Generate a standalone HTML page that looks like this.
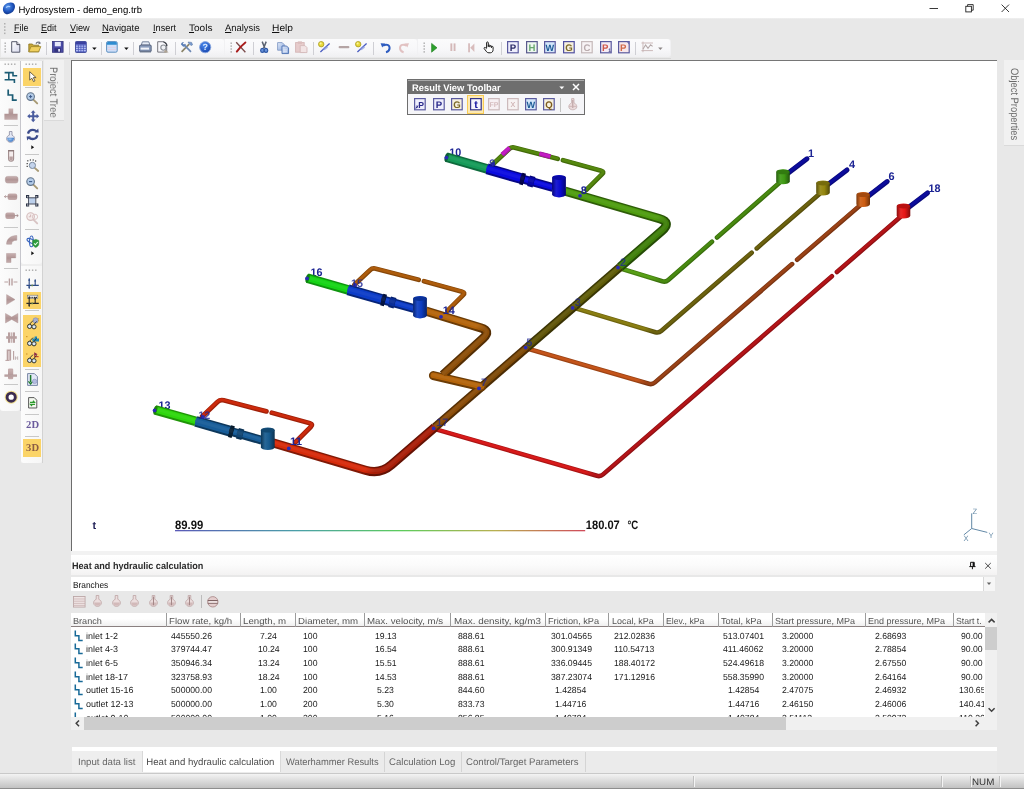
<!DOCTYPE html>
<html lang="en"><head><meta charset="utf-8"><title>Hydrosystem - demo_eng.trb</title>
<style>
html,body{margin:0;padding:0;}
body{width:1024px;height:789px;overflow:hidden;background:#e8e8e8;font-family:"Liberation Sans",sans-serif;position:relative;text-rendering:geometricPrecision;}
svg text{text-rendering:geometricPrecision;}
#app{position:absolute;left:0;top:0;width:1024px;height:789px;overflow:hidden;will-change:transform;}
.r{position:absolute;box-sizing:border-box;}
.t{position:absolute;white-space:pre;transform-origin:0 50%;}
svg{position:absolute;overflow:visible;}
u{text-decoration:underline;text-underline-offset:1px;text-decoration-thickness:0.8px;}
</style></head>
<body>
<div id="app">
<!-- 10_chrome -->
<div class="r" style="left:0px;top:0px;width:1024px;height:18.3px;background:#fff;"></div>
<span class="t" style="left:18.43px;top:4.00px;font-size:9.6px;line-height:14px;color:#000;">Hydrosystem - demo_eng.trb</span>
<svg style="left:925px;top:0" width="99" height="19" viewBox="0 0 99 19"><g stroke="#222" stroke-width="0.9" fill="none"><path d="M4.5 8.5h8.5"/><rect x="40.8" y="6.3" width="5.6" height="5.6"/><path d="M42.6 6.3V4.6h5.6v5.6h-1.8"/><path d="M76.6 4.6l7.4 7.4M84 4.6l-7.4 7.4"/></g></svg>
<div class="r" style="left:0px;top:18.3px;width:1024px;height:20.5px;background:linear-gradient(#f1f1f1,#e8e8e8 1.2px);"></div>
<svg style="left:3px;top:22px" width="4" height="14"><g fill="#b0b0b0"><rect x="1" y="1" width="1.5" height="1.5"/><rect x="1" y="4.2" width="1.5" height="1.5"/><rect x="1" y="7.4" width="1.5" height="1.5"/><rect x="1" y="10.6" width="1.5" height="1.5"/></g></svg>
<span class="t" style="left:13.53px;top:22.00px;font-size:9.6px;line-height:14px;color:#111;transform:scaleX(0.9374);"><u>F</u>ile</span>
<span class="t" style="left:41.13px;top:22.00px;font-size:9.6px;line-height:14px;color:#111;transform:scaleX(0.9370);"><u>E</u>dit</span>
<span class="t" style="left:69.73px;top:22.00px;font-size:9.6px;line-height:14px;color:#111;transform:scaleX(0.9547);"><u>V</u>iew</span>
<span class="t" style="left:102.43px;top:22.00px;font-size:9.6px;line-height:14px;color:#111;transform:scaleX(0.9898);"><u>N</u>avigate</span>
<span class="t" style="left:152.93px;top:22.00px;font-size:9.6px;line-height:14px;color:#111;transform:scaleX(0.9580);"><u>I</u>nsert</span>
<span class="t" style="left:188.93px;top:22.00px;font-size:9.6px;line-height:14px;color:#111;transform:scaleX(1.0486);"><u>T</u>ools</span>
<span class="t" style="left:224.93px;top:22.00px;font-size:9.6px;line-height:14px;color:#111;transform:scaleX(0.9791);"><u>A</u>nalysis</span>
<span class="t" style="left:271.93px;top:22.00px;font-size:9.6px;line-height:14px;color:#111;transform:scaleX(1.0637);"><u>H</u>elp</span>
<div class="r" style="left:0px;top:38.5px;width:1024px;height:20.5px;background:#e8e8e8;"></div>
<div class="r" style="left:0.5px;top:38.8px;width:670px;height:18.6px;background:#f1f1f3;border-radius:0 3px 3px 0;"></div>
<div class="r" style="left:0.5px;top:38.8px;width:223.7px;height:18.6px;background:linear-gradient(#fbfbfc,#f7f7f9 60%,#f0f0f2);border-radius:0 3px 3px 0;"></div>
<div class="r" style="left:225.3px;top:38.8px;width:191.5px;height:18.6px;background:linear-gradient(#fbfbfc,#f7f7f9 60%,#f0f0f2);border-radius:0 3px 3px 0;"></div>
<div class="r" style="left:418.2px;top:38.8px;width:252.2px;height:18.6px;background:linear-gradient(#fbfbfc,#f7f7f9 60%,#f0f0f2);border-radius:0 3px 3px 0;"></div>
<svg style="left:4px;top:42px" width="3" height="13"><g fill="#a8a8a8"><rect x="0.5" y="0.5" width="1.4" height="1.4"/><rect x="0.5" y="3.4" width="1.4" height="1.4"/><rect x="0.5" y="6.3" width="1.4" height="1.4"/><rect x="0.5" y="9.2" width="1.4" height="1.4"/></g></svg>
<svg style="left:229.5px;top:42px" width="3" height="13"><g fill="#a8a8a8"><rect x="0.5" y="0.5" width="1.4" height="1.4"/><rect x="0.5" y="3.4" width="1.4" height="1.4"/><rect x="0.5" y="6.3" width="1.4" height="1.4"/><rect x="0.5" y="9.2" width="1.4" height="1.4"/></g></svg>
<svg style="left:422.5px;top:42px" width="3" height="13"><g fill="#a8a8a8"><rect x="0.5" y="0.5" width="1.4" height="1.4"/><rect x="0.5" y="3.4" width="1.4" height="1.4"/><rect x="0.5" y="6.3" width="1.4" height="1.4"/><rect x="0.5" y="9.2" width="1.4" height="1.4"/></g></svg>
<div class="r" style="left:45.5px;top:42px;width:1px;height:13px;background:#cfcfd4;"></div>
<div class="r" style="left:68.9px;top:42px;width:1px;height:13px;background:#cfcfd4;"></div>
<div class="r" style="left:100.5px;top:42px;width:1px;height:13px;background:#cfcfd4;"></div>
<div class="r" style="left:133.1px;top:42px;width:1px;height:13px;background:#cfcfd4;"></div>
<div class="r" style="left:174.8px;top:42px;width:1px;height:13px;background:#cfcfd4;"></div>
<div class="r" style="left:252.5px;top:42px;width:1px;height:13px;background:#cfcfd4;"></div>
<div class="r" style="left:312.8px;top:42px;width:1px;height:13px;background:#cfcfd4;"></div>
<div class="r" style="left:373.0px;top:42px;width:1px;height:13px;background:#cfcfd4;"></div>
<div class="r" style="left:501.0px;top:42px;width:1px;height:13px;background:#cfcfd4;"></div>
<div class="r" style="left:635.0px;top:42px;width:1px;height:13px;background:#cfcfd4;"></div>
<div class="r" style="left:0px;top:57.3px;width:671px;height:2.2px;background:linear-gradient(#f2f2f2,#cfcfcf);"></div>
<div class="r" style="left:0px;top:59px;width:71px;height:715px;background:#e8e8e8;"></div>
<div class="r" style="left:0px;top:60.5px;width:20.4px;height:350.5px;background:linear-gradient(90deg,#fcfcfc,#f6f6f6);border-radius:0 0 3px 3px;"></div>
<div class="r" style="left:20.2px;top:60.5px;width:0.9px;height:350px;background:#c6c6cc;"></div>
<div class="r" style="left:21px;top:60.5px;width:20.6px;height:402px;background:#eeeeee;"></div>
<div class="r" style="left:21px;top:60.5px;width:20.6px;height:203.5px;background:linear-gradient(90deg,#fcfcfc,#f6f6f6);border-radius:0 0 3px 3px;"></div>
<div class="r" style="left:21px;top:265.6px;width:20.6px;height:197px;background:linear-gradient(90deg,#fcfcfc,#f6f6f6);border-radius:0 0 3px 3px;"></div>
<div class="r" style="left:41.5px;top:60.5px;width:0.7px;height:402px;background:#d2d2d2;"></div>
<svg style="left:4px;top:63px" width="14" height="3"><g fill="#a8a8a8"><rect x="0.5" y="0.5" width="1.4" height="1.4"/><rect x="3.7" y="0.5" width="1.4" height="1.4"/><rect x="6.9" y="0.5" width="1.4" height="1.4"/><rect x="10.1" y="0.5" width="1.4" height="1.4"/></g></svg>
<svg style="left:24.5px;top:63px" width="14" height="3"><g fill="#a8a8a8"><rect x="0.5" y="0.5" width="1.4" height="1.4"/><rect x="3.7" y="0.5" width="1.4" height="1.4"/><rect x="6.9" y="0.5" width="1.4" height="1.4"/><rect x="10.1" y="0.5" width="1.4" height="1.4"/></g></svg>
<svg style="left:24.5px;top:269px" width="14" height="3"><g fill="#a8a8a8"><rect x="0.5" y="0.5" width="1.4" height="1.4"/><rect x="3.7" y="0.5" width="1.4" height="1.4"/><rect x="6.9" y="0.5" width="1.4" height="1.4"/><rect x="10.1" y="0.5" width="1.4" height="1.4"/></g></svg>
<div class="r" style="left:3.5px;top:125.1px;width:14px;height:1px;background:#c8c8c8;"></div>
<div class="r" style="left:3.5px;top:166.1px;width:14px;height:1px;background:#c8c8c8;"></div>
<div class="r" style="left:3.5px;top:226.8px;width:14px;height:1px;background:#c8c8c8;"></div>
<div class="r" style="left:3.5px;top:268.4px;width:14px;height:1px;background:#c8c8c8;"></div>
<div class="r" style="left:3.5px;top:383.7px;width:14px;height:1px;background:#c8c8c8;"></div>
<div class="r" style="left:25px;top:87.0px;width:14px;height:1px;background:#c8c8c8;"></div>
<div class="r" style="left:25px;top:153.9px;width:14px;height:1px;background:#c8c8c8;"></div>
<div class="r" style="left:25px;top:228.8px;width:14px;height:1px;background:#c8c8c8;"></div>
<div class="r" style="left:25px;top:310.4px;width:14px;height:1px;background:#c8c8c8;"></div>
<div class="r" style="left:25px;top:368.5px;width:14px;height:1px;background:#c8c8c8;"></div>
<div class="r" style="left:25px;top:391.2px;width:14px;height:1px;background:#c8c8c8;"></div>
<div class="r" style="left:25px;top:413.5px;width:14px;height:1px;background:#c8c8c8;"></div>
<div class="r" style="left:25px;top:435.8px;width:14px;height:1px;background:#c8c8c8;"></div>
<div class="r" style="left:23px;top:68.2px;width:17.8px;height:17.7px;background:#fbd468;"></div>
<div class="r" style="left:23px;top:292.2px;width:17.8px;height:17.3px;background:#fbd468;"></div>
<div class="r" style="left:23px;top:314.5px;width:17.8px;height:52.3px;background:#fbd468;"></div>
<div class="r" style="left:23px;top:439.4px;width:17.8px;height:17.2px;background:#fbd468;"></div>
<div class="r" style="left:43.6px;top:60px;width:20.4px;height:61.4px;background:#f1f1f1;border-bottom:1px solid #dadada;"></div>
<span class="t" style="left:53.0px;top:67.0px;font-size:10.8px;line-height:10px;color:#6a6a6a;transform-origin:0 0;transform:rotate(90deg) translate(0,-5px) scaleX(0.8691);">Project Tree</span>
<div class="r" style="left:997px;top:59px;width:27px;height:715px;background:#e8e8e8;"></div>
<div class="r" style="left:1003.6px;top:60px;width:20.4px;height:86.4px;background:#f1f1f1;border-bottom:1px solid #dadada;"></div>
<span class="t" style="left:1013.6px;top:67.6px;font-size:10.8px;line-height:10px;color:#6a6a6a;transform-origin:0 0;transform:rotate(90deg) translate(0,-5px) scaleX(0.8654);">Object Properties</span>
<div class="r" style="left:70.6px;top:59.5px;width:926.4px;height:491.5px;background:#fff;border-left:1.3px solid #6c6c6c;border-top:1.2px solid #767676;"></div>
<!-- 20_scene -->
<svg style="left:0;top:0" width="1024" height="789" viewBox="0 0 1024 789" font-family="Liberation Sans, sans-serif"><defs><linearGradient id="p1" gradientUnits="userSpaceOnUse" x1="662.3" y1="278.6" x2="657.0" y2="272.6"><stop offset="0" stop-color="#396e0c"/><stop offset="1" stop-color="#468011"/></linearGradient><linearGradient id="p2" gradientUnits="userSpaceOnUse" x1="662.3" y1="278.6" x2="657.0" y2="272.6"><stop offset="0" stop-color="#488a10"/><stop offset="1" stop-color="#58a016"/></linearGradient><linearGradient id="p3" gradientUnits="userSpaceOnUse" x1="655.5" y1="329.4" x2="650.3" y2="323.4"><stop offset="0" stop-color="#564e0b"/><stop offset="1" stop-color="#6e640e"/></linearGradient><linearGradient id="p4" gradientUnits="userSpaceOnUse" x1="655.5" y1="329.4" x2="650.3" y2="323.4"><stop offset="0" stop-color="#6c620e"/><stop offset="1" stop-color="#8a7e12"/></linearGradient><linearGradient id="p5" gradientUnits="userSpaceOnUse" x1="649.0" y1="381.0" x2="643.8" y2="375.0"><stop offset="0" stop-color="#7b3411"/><stop offset="1" stop-color="#9c4314"/></linearGradient><linearGradient id="p6" gradientUnits="userSpaceOnUse" x1="649.0" y1="381.0" x2="643.8" y2="375.0"><stop offset="0" stop-color="#9a4216"/><stop offset="1" stop-color="#c4541a"/></linearGradient><linearGradient id="p7" gradientUnits="userSpaceOnUse" x1="597.1" y1="473.0" x2="591.9" y2="467.0"><stop offset="0" stop-color="#901013"/><stop offset="1" stop-color="#ac1414"/></linearGradient><linearGradient id="p8" gradientUnits="userSpaceOnUse" x1="597.1" y1="473.0" x2="591.9" y2="467.0"><stop offset="0" stop-color="#b41418"/><stop offset="1" stop-color="#d81a1a"/></linearGradient><linearGradient id="g3f9a14" x1="0" x2="1" y1="0" y2="0"><stop offset="0" stop-color="#255c0c"/><stop offset="0.3" stop-color="#4ea226"/><stop offset="0.6" stop-color="#3f9a14"/><stop offset="1" stop-color="#22540b"/></linearGradient><linearGradient id="g94860f" x1="0" x2="1" y1="0" y2="0"><stop offset="0" stop-color="#585009"/><stop offset="0.3" stop-color="#9c8f22"/><stop offset="0.6" stop-color="#94860f"/><stop offset="1" stop-color="#514908"/></linearGradient><linearGradient id="gcc5c12" x1="0" x2="1" y1="0" y2="0"><stop offset="0" stop-color="#7a370a"/><stop offset="0.3" stop-color="#d06924"/><stop offset="0.6" stop-color="#cc5c12"/><stop offset="1" stop-color="#703209"/></linearGradient><linearGradient id="ge61616" x1="0" x2="1" y1="0" y2="0"><stop offset="0" stop-color="#8a0d0d"/><stop offset="0.3" stop-color="#e82828"/><stop offset="0.6" stop-color="#e61616"/><stop offset="1" stop-color="#7e0c0c"/></linearGradient><linearGradient id="p9" gradientUnits="userSpaceOnUse" x1="668.5" y1="218.5" x2="663.3" y2="212.5"><stop offset="0" stop-color="#254c06"/><stop offset="1" stop-color="#2e5d08"/></linearGradient><linearGradient id="p10" gradientUnits="userSpaceOnUse" x1="668.5" y1="218.5" x2="663.3" y2="212.5"><stop offset="0" stop-color="#3f7f0a"/><stop offset="1" stop-color="#4e9c0e"/></linearGradient><linearGradient id="p11" gradientUnits="userSpaceOnUse" x1="668.5" y1="218.5" x2="663.3" y2="212.5"><stop offset="0" stop-color="#488516"/><stop offset="1" stop-color="#56a01a"/></linearGradient><linearGradient id="p12" gradientUnits="userSpaceOnUse" x1="487.8" y1="327.3" x2="482.4" y2="321.4"><stop offset="0" stop-color="#542e04"/><stop offset="1" stop-color="#6c3c06"/></linearGradient><linearGradient id="p13" gradientUnits="userSpaceOnUse" x1="487.8" y1="327.3" x2="482.4" y2="321.4"><stop offset="0" stop-color="#8c4e08"/><stop offset="1" stop-color="#b4640a"/></linearGradient><linearGradient id="p14" gradientUnits="userSpaceOnUse" x1="487.8" y1="327.3" x2="482.4" y2="321.4"><stop offset="0" stop-color="#915614"/><stop offset="1" stop-color="#b76b16"/></linearGradient><linearGradient id="p15" gradientUnits="userSpaceOnUse" x1="376.9" y1="470.8" x2="371.7" y2="464.8"><stop offset="0" stop-color="#641204"/><stop offset="1" stop-color="#801906"/></linearGradient><linearGradient id="p16" gradientUnits="userSpaceOnUse" x1="376.9" y1="470.8" x2="371.7" y2="464.8"><stop offset="0" stop-color="#a81e08"/><stop offset="1" stop-color="#d62a0a"/></linearGradient><linearGradient id="p17" gradientUnits="userSpaceOnUse" x1="376.9" y1="470.8" x2="371.7" y2="464.8"><stop offset="0" stop-color="#ac2914"/><stop offset="1" stop-color="#d83416"/></linearGradient><linearGradient id="g0a0ad0" x1="0" x2="1" y1="0" y2="0"><stop offset="0" stop-color="#06067c"/><stop offset="0.3" stop-color="#1d1dd3"/><stop offset="0.6" stop-color="#0a0ad0"/><stop offset="1" stop-color="#050572"/></linearGradient><linearGradient id="g0c3cc0" x1="0" x2="1" y1="0" y2="0"><stop offset="0" stop-color="#072473"/><stop offset="0.3" stop-color="#1f4bc5"/><stop offset="0.6" stop-color="#0c3cc0"/><stop offset="1" stop-color="#062169"/></linearGradient><linearGradient id="g165a8e" x1="0" x2="1" y1="0" y2="0"><stop offset="0" stop-color="#0d3655"/><stop offset="0.3" stop-color="#286797"/><stop offset="0.6" stop-color="#165a8e"/><stop offset="1" stop-color="#0c314e"/></linearGradient><linearGradient id="leg" x1="0" x2="1" y1="0" y2="0"><stop offset="0" stop-color="#5a5ab8"/><stop offset="0.3" stop-color="#4aa0a8"/><stop offset="0.55" stop-color="#5ccc5c"/><stop offset="0.78" stop-color="#b8b050"/><stop offset="1" stop-color="#d04a5a"/></linearGradient></defs><text x="449.2" y="155.8" font-size="11" font-weight="bold" fill="#1c2494" textLength="12.0" lengthAdjust="spacingAndGlyphs">10</text><text x="310.6" y="275.8" font-size="11" font-weight="bold" fill="#1c2494" textLength="12.0" lengthAdjust="spacingAndGlyphs">16</text><text x="158.4" y="408.8" font-size="11" font-weight="bold" fill="#1c2494" textLength="12.0" lengthAdjust="spacingAndGlyphs">13</text><g fill="none"><path d="M619.0 268.0L662.2 281.3Q665.6 282.4 668.3 280.0L712.0 241.8" stroke="url(#p1)" stroke-width="4.6" stroke-linecap="round"/><path d="M619.0 268.0L662.2 281.3Q665.6 282.4 668.3 280.0L712.0 241.8" stroke="url(#p2)" stroke-width="2.6" stroke-linecap="round" transform="translate(-0.15,-0.3)"/><path d="M717.0 237.5L783.2 179.6" stroke="#396e0c" stroke-width="4.6" stroke-linecap="round"/><path d="M717.0 237.5L783.2 179.6" stroke="#488a10" stroke-width="2.6" stroke-linecap="round" transform="translate(-0.15,-0.3)"/><path d="M573.2 307.6L655.4 332.2Q658.8 333.2 661.5 330.8L751.7 252.7" stroke="url(#p3)" stroke-width="4.6" stroke-linecap="round"/><path d="M573.2 307.6L655.4 332.2Q658.8 333.2 661.5 330.8L751.7 252.7" stroke="url(#p4)" stroke-width="2.6" stroke-linecap="round" transform="translate(-0.15,-0.3)"/><path d="M756.7 248.4L823.2 190.8" stroke="#564e0b" stroke-width="4.6" stroke-linecap="round"/><path d="M756.7 248.4L823.2 190.8" stroke="#6c620e" stroke-width="2.6" stroke-linecap="round" transform="translate(-0.15,-0.3)"/><path d="M526.2 348.3L648.8 383.8Q652.3 384.8 655.0 382.4L792.1 264.1" stroke="url(#p5)" stroke-width="4.6" stroke-linecap="round"/><path d="M526.2 348.3L648.8 383.8Q652.3 384.8 655.0 382.4L792.1 264.1" stroke="url(#p6)" stroke-width="2.6" stroke-linecap="round" transform="translate(-0.15,-0.3)"/><path d="M797.1 259.7L863.5 202.4" stroke="#7b3411" stroke-width="4.6" stroke-linecap="round"/><path d="M797.1 259.7L863.5 202.4" stroke="#9a4216" stroke-width="2.6" stroke-linecap="round" transform="translate(-0.15,-0.3)"/><path d="M433.4 428.6L596.9 475.8Q600.4 476.8 603.1 474.4L831.9 276.3" stroke="url(#p7)" stroke-width="4.6" stroke-linecap="round"/><path d="M433.4 428.6L596.9 475.8Q600.4 476.8 603.1 474.4L831.9 276.3" stroke="url(#p8)" stroke-width="2.6" stroke-linecap="round" transform="translate(-0.15,-0.3)"/><path d="M836.9 272.0L903.8 214.0" stroke="#901013" stroke-width="4.6" stroke-linecap="round"/><path d="M836.9 272.0L903.8 214.0" stroke="#b41418" stroke-width="2.6" stroke-linecap="round" transform="translate(-0.15,-0.3)"/><path d="M787.0 174.1L807.0 158.8" stroke="#09097c" stroke-width="5.0" stroke-linecap="round"/><path d="M787.0 174.1L807.0 158.8" stroke="#0c0c9c" stroke-width="3.0" stroke-linecap="round" transform="translate(-0.15,-0.3)"/><path d="M776.2 171.9V181.5A6.8 2.8 0 0 0 789.8 181.5V171.9A6.8 2.6 0 0 0 776.2 171.9Z" fill="url(#g3f9a14)"/><ellipse cx="783" cy="172.0" rx="6.4" ry="2.3" fill="#327b10"/><path d="M827.0 185.3L847.0 170.0" stroke="#09097c" stroke-width="5.0" stroke-linecap="round"/><path d="M827.0 185.3L847.0 170.0" stroke="#0c0c9c" stroke-width="3.0" stroke-linecap="round" transform="translate(-0.15,-0.3)"/><path d="M816.2 183.1V192.7A6.8 2.8 0 0 0 829.8 192.7V183.1A6.8 2.6 0 0 0 816.2 183.1Z" fill="url(#g94860f)"/><ellipse cx="823" cy="183.2" rx="6.4" ry="2.3" fill="#766b0c"/><path d="M867.2 196.9L887.2 181.6" stroke="#09097c" stroke-width="5.0" stroke-linecap="round"/><path d="M867.2 196.9L887.2 181.6" stroke="#0c0c9c" stroke-width="3.0" stroke-linecap="round" transform="translate(-0.15,-0.3)"/><path d="M856.4 194.7V204.3A6.8 2.8 0 0 0 870.0 204.3V194.7A6.8 2.6 0 0 0 856.4 194.7Z" fill="url(#gcc5c12)"/><ellipse cx="863.2" cy="194.8" rx="6.4" ry="2.3" fill="#a3490e"/><path d="M907.5 208.3L927.5 193.0" stroke="#09097c" stroke-width="5.0" stroke-linecap="round"/><path d="M907.5 208.3L927.5 193.0" stroke="#0c0c9c" stroke-width="3.0" stroke-linecap="round" transform="translate(-0.15,-0.3)"/><path d="M896.7 206.1V215.7A6.8 2.8 0 0 0 910.3 215.7V206.1A6.8 2.6 0 0 0 896.7 206.1Z" fill="url(#ge61616)"/><ellipse cx="903.5" cy="206.2" rx="6.4" ry="2.3" fill="#b81111"/><path d="M565.0 191.2L659.3 218.7Q671.8 222.3 662.0 230.8L620.1 267.0" stroke="url(#p9)" stroke-width="9.2" stroke-linecap="butt"/><path d="M620.1 267.0L574.5 306.5" stroke="#393704" stroke-width="8.7" stroke-linecap="butt"/><path d="M574.5 306.5L527.3 347.3" stroke="#393204" stroke-width="8.7" stroke-linecap="butt"/><path d="M527.3 347.3L481.7 386.8" stroke="#4b2c04" stroke-width="8.7" stroke-linecap="butt"/><path d="M481.7 386.8L434.9 427.3" stroke="#522d04" stroke-width="8.7" stroke-linecap="butt"/><path d="M433.4 375.6L481.7 386.8" stroke="#6c3c06" stroke-width="9.0" stroke-linecap="round"/><path d="M426.0 311.2L480.7 327.8Q491.2 331.0 483.1 338.4L443.0 375.0" stroke="url(#p12)" stroke-width="9.2" stroke-linecap="butt"/><path d="M273.0 442.9L365.8 470.3Q380.2 474.6 391.5 464.8L434.9 427.3" stroke="url(#p15)" stroke-width="9.2" stroke-linecap="butt"/><path d="M565.0 191.2L659.3 218.7Q671.8 222.3 662.0 230.8L620.1 267.0" stroke="url(#p10)" stroke-width="5.8" stroke-linecap="butt" transform="translate(-0.15,-0.3)"/><path d="M620.1 267.0L574.5 306.5" stroke="#5f5c08" stroke-width="5.3" stroke-linecap="butt" transform="translate(-0.15,-0.3)"/><path d="M574.5 306.5L527.3 347.3" stroke="#5f5408" stroke-width="5.3" stroke-linecap="butt" transform="translate(-0.15,-0.3)"/><path d="M527.3 347.3L481.7 386.8" stroke="#7e4a08" stroke-width="5.3" stroke-linecap="butt" transform="translate(-0.15,-0.3)"/><path d="M481.7 386.8L434.9 427.3" stroke="#8a4c08" stroke-width="5.3" stroke-linecap="butt" transform="translate(-0.15,-0.3)"/><path d="M433.4 375.6L481.7 386.8" stroke="#b4640a" stroke-width="5.6" stroke-linecap="round" transform="translate(-0.15,-0.3)"/><path d="M426.0 311.2L480.7 327.8Q491.2 331.0 483.1 338.4L443.0 375.0" stroke="url(#p13)" stroke-width="5.8" stroke-linecap="butt" transform="translate(-0.15,-0.3)"/><path d="M273.0 442.9L365.8 470.3Q380.2 474.6 391.5 464.8L434.9 427.3" stroke="url(#p16)" stroke-width="5.8" stroke-linecap="butt" transform="translate(-0.15,-0.3)"/><path d="M565.0 191.2L659.3 218.7Q671.8 222.3 662.0 230.8L620.1 267.0" stroke="url(#p11)" stroke-width="2.8" stroke-linecap="butt" transform="translate(-0.4,-0.9)"/><path d="M620.1 267.0L574.5 306.5" stroke="#676414" stroke-width="2.6" stroke-linecap="butt" transform="translate(-0.4,-0.9)"/><path d="M574.5 306.5L527.3 347.3" stroke="#675c14" stroke-width="2.6" stroke-linecap="butt" transform="translate(-0.4,-0.9)"/><path d="M527.3 347.3L481.7 386.8" stroke="#845314" stroke-width="2.6" stroke-linecap="butt" transform="translate(-0.4,-0.9)"/><path d="M481.7 386.8L434.9 427.3" stroke="#8f5414" stroke-width="2.6" stroke-linecap="butt" transform="translate(-0.4,-0.9)"/><path d="M433.4 375.6L481.7 386.8" stroke="#b76b16" stroke-width="2.7" stroke-linecap="round" transform="translate(-0.4,-0.9)"/><path d="M426.0 311.2L480.7 327.8Q491.2 331.0 483.1 338.4L443.0 375.0" stroke="url(#p14)" stroke-width="2.8" stroke-linecap="butt" transform="translate(-0.4,-0.9)"/><path d="M273.0 442.9L365.8 470.3Q380.2 474.6 391.5 464.8L434.9 427.3" stroke="url(#p17)" stroke-width="2.8" stroke-linecap="butt" transform="translate(-0.4,-0.9)"/><path d="M493.4 163.8L508.9 149.2Q511.4 146.8 514.8 147.7L557.6 158.8" stroke="#426a0a" stroke-width="4.8" stroke-linecap="round"/><path d="M493.4 163.8L508.9 149.2Q511.4 146.8 514.8 147.7L557.6 158.8" stroke="#55880e" stroke-width="2.8" stroke-linecap="round" transform="translate(-0.15,-0.3)"/><path d="M563.0 160.2L601.2 170.7Q604.6 171.6 602.1 174.1L586.6 189.6" stroke="#426a0a" stroke-width="4.8" stroke-linecap="round"/><path d="M563.0 160.2L601.2 170.7Q604.6 171.6 602.1 174.1L586.6 189.6" stroke="#55880e" stroke-width="2.8" stroke-linecap="round" transform="translate(-0.15,-0.3)"/><path d="M502.2 154.8L509.6 147.9" stroke="#a617a6" stroke-width="4.8" stroke-linecap="butt"/><path d="M502.2 154.8L509.6 147.9" stroke="#c41cc4" stroke-width="2.8" stroke-linecap="butt" transform="translate(-0.15,-0.3)"/><path d="M539.6 153.8L550.4 156.6" stroke="#a617a6" stroke-width="4.8" stroke-linecap="butt"/><path d="M539.6 153.8L550.4 156.6" stroke="#c41cc4" stroke-width="2.8" stroke-linecap="butt" transform="translate(-0.15,-0.3)"/><path d="M446.2 157.2L487.0 168.8" stroke="#0e6b3d" stroke-width="9.6" stroke-linecap="butt"/><path d="M446.2 157.2L487.0 168.8" stroke="#159a58" stroke-width="6.2" stroke-linecap="butt" transform="translate(-0.15,-0.3)"/><path d="M446.2 157.2L487.0 168.8" stroke="#209f60" stroke-width="2.9" stroke-linecap="butt" transform="translate(-0.4,-0.9)"/><ellipse cx="446.6" cy="157.3" rx="1.8" ry="4.3" transform="rotate(16 446.6 157.3)" fill="#0d5f36"/><path d="M487.0 168.8L522.4 178.9" stroke="#060686" stroke-width="10.8" stroke-linecap="butt"/><path d="M487.0 168.8L522.4 178.9" stroke="#0a0ae0" stroke-width="7.4" stroke-linecap="butt" transform="translate(-0.15,-0.3)"/><path d="M487.0 168.8L522.4 178.9" stroke="#1616e1" stroke-width="3.2" stroke-linecap="butt" transform="translate(-0.4,-0.9)"/><path d="M522.4 178.9L553.0 187.6" stroke="#060686" stroke-width="8.8" stroke-linecap="butt"/><path d="M522.4 178.9L553.0 187.6" stroke="#0a0ae0" stroke-width="5.4" stroke-linecap="butt" transform="translate(-0.15,-0.3)"/><path d="M522.4 178.9L553.0 187.6" stroke="#1616e1" stroke-width="2.6" stroke-linecap="butt" transform="translate(-0.4,-0.9)"/><path d="M520.8 178.5L524.4 179.5" stroke="#02023e" stroke-width="12" stroke-linecap="butt"/><path d="M520.8 178.5L524.4 179.5" stroke="#03034e" stroke-width="8.6" stroke-linecap="butt" transform="translate(-0.15,-0.3)"/><path d="M520.8 178.5L524.4 179.5" stroke="#0f0f56" stroke-width="3.6" stroke-linecap="butt" transform="translate(-0.4,-0.9)"/><path d="M528.6 180.7L534.0 182.2" stroke="#05057e" stroke-width="10.8" stroke-linecap="butt"/><path d="M528.6 180.7L534.0 182.2" stroke="#0707a8" stroke-width="7.4" stroke-linecap="butt" transform="translate(-0.15,-0.3)"/><path d="M528.6 180.7L534.0 182.2" stroke="#1313ac" stroke-width="3.2" stroke-linecap="butt" transform="translate(-0.4,-0.9)"/><path d="M552.1 177.6V194.6A6.9 2.8 0 0 0 565.9 194.6V177.6A6.9 2.6 0 0 0 552.1 177.6Z" fill="url(#g0a0ad0)"/><ellipse cx="559" cy="177.7" rx="6.5" ry="2.3" fill="#0808a6"/><path d="M354.4 284.8L369.9 270.2Q372.4 267.8 375.8 268.7L418.6 279.8" stroke="#864709" stroke-width="4.8" stroke-linecap="round"/><path d="M354.4 284.8L369.9 270.2Q372.4 267.8 375.8 268.7L418.6 279.8" stroke="#ad5c0c" stroke-width="2.8" stroke-linecap="round" transform="translate(-0.15,-0.3)"/><path d="M424.0 281.2L462.2 291.7Q465.6 292.6 463.1 295.1L447.6 310.6" stroke="#864709" stroke-width="4.8" stroke-linecap="round"/><path d="M424.0 281.2L462.2 291.7Q465.6 292.6 463.1 295.1L447.6 310.6" stroke="#ad5c0c" stroke-width="2.8" stroke-linecap="round" transform="translate(-0.15,-0.3)"/><path d="M307.2 278.2L348.0 289.8" stroke="#0f940f" stroke-width="9.6" stroke-linecap="butt"/><path d="M307.2 278.2L348.0 289.8" stroke="#16d416" stroke-width="6.2" stroke-linecap="butt" transform="translate(-0.15,-0.3)"/><path d="M307.2 278.2L348.0 289.8" stroke="#21d621" stroke-width="2.9" stroke-linecap="butt" transform="translate(-0.4,-0.9)"/><ellipse cx="307.6" cy="278.3" rx="1.8" ry="4.3" transform="rotate(16 307.6 278.3)" fill="#0d830d"/><path d="M348.0 289.8L383.4 299.9" stroke="#072478" stroke-width="10.8" stroke-linecap="butt"/><path d="M348.0 289.8L383.4 299.9" stroke="#0c3cc8" stroke-width="7.4" stroke-linecap="butt" transform="translate(-0.15,-0.3)"/><path d="M348.0 289.8L383.4 299.9" stroke="#1845ca" stroke-width="3.2" stroke-linecap="butt" transform="translate(-0.4,-0.9)"/><path d="M383.4 299.9L414.0 308.6" stroke="#072478" stroke-width="8.8" stroke-linecap="butt"/><path d="M383.4 299.9L414.0 308.6" stroke="#0c3cc8" stroke-width="5.4" stroke-linecap="butt" transform="translate(-0.15,-0.3)"/><path d="M383.4 299.9L414.0 308.6" stroke="#1845ca" stroke-width="2.6" stroke-linecap="butt" transform="translate(-0.4,-0.9)"/><path d="M381.8 299.5L385.4 300.5" stroke="#031038" stroke-width="12" stroke-linecap="butt"/><path d="M381.8 299.5L385.4 300.5" stroke="#041546" stroke-width="8.6" stroke-linecap="butt" transform="translate(-0.15,-0.3)"/><path d="M381.8 299.5L385.4 300.5" stroke="#10204f" stroke-width="3.6" stroke-linecap="butt" transform="translate(-0.4,-0.9)"/><path d="M389.6 301.7L395.0 303.2" stroke="#062170" stroke-width="10.8" stroke-linecap="butt"/><path d="M389.6 301.7L395.0 303.2" stroke="#092d96" stroke-width="7.4" stroke-linecap="butt" transform="translate(-0.15,-0.3)"/><path d="M389.6 301.7L395.0 303.2" stroke="#15379b" stroke-width="3.2" stroke-linecap="butt" transform="translate(-0.4,-0.9)"/><path d="M413.1 298.6V315.6A6.9 2.8 0 0 0 426.9 315.6V298.6A6.9 2.6 0 0 0 413.1 298.6Z" fill="url(#g0c3cc0)"/><ellipse cx="420" cy="298.7" rx="6.5" ry="2.3" fill="#093099"/><path d="M202.2 416.4L217.7 401.8Q220.2 399.4 223.6 400.3L266.4 411.4" stroke="#9f2009" stroke-width="4.8" stroke-linecap="round"/><path d="M202.2 416.4L217.7 401.8Q220.2 399.4 223.6 400.3L266.4 411.4" stroke="#cc2a0c" stroke-width="2.8" stroke-linecap="round" transform="translate(-0.15,-0.3)"/><path d="M271.8 412.8L310.0 423.3Q313.4 424.2 310.9 426.7L295.4 442.2" stroke="#9f2009" stroke-width="4.8" stroke-linecap="round"/><path d="M271.8 412.8L310.0 423.3Q313.4 424.2 310.9 426.7L295.4 442.2" stroke="#cc2a0c" stroke-width="2.8" stroke-linecap="round" transform="translate(-0.15,-0.3)"/><path d="M155.0 409.8L195.8 421.4" stroke="#209508" stroke-width="9.6" stroke-linecap="butt"/><path d="M155.0 409.8L195.8 421.4" stroke="#2ed60c" stroke-width="6.2" stroke-linecap="butt" transform="translate(-0.15,-0.3)"/><path d="M155.0 409.8L195.8 421.4" stroke="#38d818" stroke-width="2.9" stroke-linecap="butt" transform="translate(-0.4,-0.9)"/><ellipse cx="155.4" cy="409.9" rx="1.8" ry="4.3" transform="rotate(16 155.4 409.9)" fill="#1c8407"/><path d="M195.8 421.4L231.2 431.5" stroke="#0d375b" stroke-width="10.8" stroke-linecap="butt"/><path d="M195.8 421.4L231.2 431.5" stroke="#175c98" stroke-width="7.4" stroke-linecap="butt" transform="translate(-0.15,-0.3)"/><path d="M195.8 421.4L231.2 431.5" stroke="#22649d" stroke-width="3.2" stroke-linecap="butt" transform="translate(-0.4,-0.9)"/><path d="M231.2 431.5L261.8 440.2" stroke="#0d375b" stroke-width="8.8" stroke-linecap="butt"/><path d="M231.2 431.5L261.8 440.2" stroke="#175c98" stroke-width="5.4" stroke-linecap="butt" transform="translate(-0.15,-0.3)"/><path d="M231.2 431.5L261.8 440.2" stroke="#22649d" stroke-width="2.6" stroke-linecap="butt" transform="translate(-0.4,-0.9)"/><path d="M229.6 431.1L233.2 432.1" stroke="#06192a" stroke-width="12" stroke-linecap="butt"/><path d="M229.6 431.1L233.2 432.1" stroke="#082035" stroke-width="8.6" stroke-linecap="butt" transform="translate(-0.15,-0.3)"/><path d="M229.6 431.1L233.2 432.1" stroke="#142b3f" stroke-width="3.6" stroke-linecap="butt" transform="translate(-0.4,-0.9)"/><path d="M237.4 433.3L242.8 434.8" stroke="#0c3355" stroke-width="10.8" stroke-linecap="butt"/><path d="M237.4 433.3L242.8 434.8" stroke="#114572" stroke-width="7.4" stroke-linecap="butt" transform="translate(-0.15,-0.3)"/><path d="M237.4 433.3L242.8 434.8" stroke="#1c4e79" stroke-width="3.2" stroke-linecap="butt" transform="translate(-0.4,-0.9)"/><path d="M260.9 430.2V447.2A6.9 2.8 0 0 0 274.7 447.2V430.2A6.9 2.6 0 0 0 260.9 430.2Z" fill="url(#g165a8e)"/><ellipse cx="267.8" cy="430.3" rx="6.5" ry="2.3" fill="#114871"/><g stroke="#6288a6" stroke-width="1" fill="none"><path d="M971.7 528.5V513.4M971.7 528.5l-7.9 6.4M971.7 528.5l15.6 3.9"/></g></g><circle cx="618" cy="267.6" r="1.9" fill="#2a2ab4"/><circle cx="572.6" cy="307.9" r="1.9" fill="#2a2ab4"/><circle cx="525.6" cy="347.6" r="1.9" fill="#2a2ab4"/><circle cx="479" cy="388.4" r="1.9" fill="#2a2ab4"/><circle cx="433.6" cy="428.4" r="1.9" fill="#2a2ab4"/><circle cx="580.0" cy="195.8" r="1.9" fill="#2a2ab4"/><circle cx="441.0" cy="316.8" r="1.9" fill="#2a2ab4"/><circle cx="288.8" cy="448.4" r="1.9" fill="#2a2ab4"/><circle cx="446.4" cy="157.6" r="1.9" fill="#2a2ab4"/><circle cx="307" cy="278.4" r="1.9" fill="#2a2ab4"/><circle cx="154.6" cy="410.4" r="1.9" fill="#2a2ab4"/><circle cx="493" cy="164" r="1.9" fill="#2a2ab4"/><circle cx="355" cy="285" r="1.9" fill="#2a2ab4"/><circle cx="203" cy="417" r="1.9" fill="#2a2ab4"/><text opacity="0.8" x="489.2" y="167.0" font-size="11" font-weight="bold" fill="#1c2494" textLength="6.1" lengthAdjust="spacingAndGlyphs">9</text><text x="580.8" y="193.5" font-size="11" font-weight="bold" fill="#1c2494" textLength="6.1" lengthAdjust="spacingAndGlyphs">8</text><text opacity="0.7" x="620.0" y="265.8" font-size="11" font-weight="bold" fill="#1c2494" textLength="6.1" lengthAdjust="spacingAndGlyphs">2</text><text opacity="0.7" x="574.8" y="306.0" font-size="11" font-weight="bold" fill="#1c2494" textLength="6.1" lengthAdjust="spacingAndGlyphs">3</text><text opacity="0.7" x="526.2" y="346.4" font-size="11" font-weight="bold" fill="#1c2494" textLength="6.1" lengthAdjust="spacingAndGlyphs">5</text><text opacity="0.7" x="481.0" y="385.8" font-size="11" font-weight="bold" fill="#1c2494" textLength="6.1" lengthAdjust="spacingAndGlyphs">7</text><text opacity="0.7" x="436.2" y="426.2" font-size="11" font-weight="bold" fill="#1c2494" textLength="12.0" lengthAdjust="spacingAndGlyphs">17</text><text opacity="0.8" x="351.0" y="287.2" font-size="11" font-weight="bold" fill="#1c2494" textLength="12.0" lengthAdjust="spacingAndGlyphs">15</text><text x="442.8" y="314.1" font-size="11" font-weight="bold" fill="#1c2494" textLength="12.0" lengthAdjust="spacingAndGlyphs">14</text><text opacity="0.8" x="198.2" y="419.0" font-size="11" font-weight="bold" fill="#1c2494" textLength="12.0" lengthAdjust="spacingAndGlyphs">12</text><text x="290.0" y="445.4" font-size="11" font-weight="bold" fill="#1c2494" textLength="12.0" lengthAdjust="spacingAndGlyphs">11</text><text x="808.0" y="156.6" font-size="11" font-weight="bold" fill="#1c2494" textLength="6.1" lengthAdjust="spacingAndGlyphs">1</text><text x="848.9" y="168.3" font-size="11" font-weight="bold" fill="#1c2494" textLength="6.1" lengthAdjust="spacingAndGlyphs">4</text><text x="888.4" y="180.0" font-size="11" font-weight="bold" fill="#1c2494" textLength="6.1" lengthAdjust="spacingAndGlyphs">6</text><text x="928.6" y="191.8" font-size="11" font-weight="bold" fill="#1c2494" textLength="12.0" lengthAdjust="spacingAndGlyphs">18</text><text x="92.4" y="528.7" font-size="10.8" font-weight="bold" fill="#1c1c54">t</text><text x="175" y="528.7" font-size="12.2" font-weight="bold" fill="#111" textLength="28.2" lengthAdjust="spacingAndGlyphs">89.99</text><text x="585.8" y="528.7" font-size="12.2" font-weight="bold" fill="#111" textLength="34" lengthAdjust="spacingAndGlyphs">180.07</text><text x="627.4" y="528.7" font-size="12.2" font-weight="bold" fill="#111" textLength="10.8" lengthAdjust="spacingAndGlyphs">°C</text><rect x="175" y="530.0" width="410.2" height="1.3" fill="url(#leg)"/><g font-size="7.6" fill="#6a8eaa"><text x="972.6" y="513.8">Z</text><text x="963.4" y="541.0">X</text><text x="988.4" y="538.0">Y</text></g></svg>
<!-- 30_bottom -->
<div class="r" style="left:71px;top:551px;width:926px;height:4.5px;background:#f2f2f2;"></div>
<div class="r" style="left:71px;top:555.3px;width:926.3px;height:20.2px;background:linear-gradient(#ffffff,#fbfbfb 50%,#f3f2f2);"></div>
<span class="t" style="left:72.33px;top:560.00px;font-size:9.6px;line-height:14px;color:#2a2a2a;font-weight:bold;transform:scaleX(0.9474);">Heat and hydraulic calculation</span>
<svg style="left:966px;top:559px" width="30" height="13" viewBox="0 0 30 13"><g fill="none" stroke="#111"><path d="M4.6 3.3h3.6v4.2M4.6 3.3v4.2M3.3 7.6h6.2M6.4 7.6v2.6" stroke-width="1"/><path d="M7.4 3.4v4" stroke-width="1.6"/><path d="M19.2 4l5.6 5.6M24.8 4l-5.6 5.6" stroke-width="0.9" stroke="#333"/></g></svg>
<div class="r" style="left:71px;top:576.8px;width:923.5px;height:14.2px;background:#fff;"></div>
<div class="r" style="left:983.2px;top:576.8px;width:0.8px;height:14.2px;background:#d8d8d8;"></div>
<div class="r" style="left:984px;top:576.8px;width:10.5px;height:14.2px;background:#f6f6f6;"></div>
<svg style="left:986px;top:581px" width="6" height="5" viewBox="0 0 6 5"><path d="M0.8 1.4h4.4L3 4z" fill="#666"/></svg>
<span class="t" style="left:72.88px;top:578.00px;font-size:8.8px;line-height:14px;color:#111;transform:scaleX(0.9469);">Branches</span>
<div class="r" style="left:71px;top:591px;width:926.3px;height:22.3px;background:#e8e8e8;"></div>
<div class="r" style="left:71px;top:613.3px;width:913.5px;height:104.1px;background:#fff;"></div>
<div class="r" style="left:71px;top:613.3px;width:913.5px;height:13.6px;background:linear-gradient(#ffffff,#ffffff 45%,#f0f0f0);border-bottom:1.1px solid #8a8080;"></div>
<div class="r" style="left:165.8px;top:613.3px;width:1px;height:13.6px;background:#9c9c9c;"></div>
<div class="r" style="left:239.8px;top:613.3px;width:1px;height:13.6px;background:#9c9c9c;"></div>
<div class="r" style="left:294.8px;top:613.3px;width:1px;height:13.6px;background:#9c9c9c;"></div>
<div class="r" style="left:364.0px;top:613.3px;width:1px;height:13.6px;background:#9c9c9c;"></div>
<div class="r" style="left:450.4px;top:613.3px;width:1px;height:13.6px;background:#9c9c9c;"></div>
<div class="r" style="left:545.0px;top:613.3px;width:1px;height:13.6px;background:#9c9c9c;"></div>
<div class="r" style="left:608.3px;top:613.3px;width:1px;height:13.6px;background:#9c9c9c;"></div>
<div class="r" style="left:662.9px;top:613.3px;width:1px;height:13.6px;background:#9c9c9c;"></div>
<div class="r" style="left:717.6px;top:613.3px;width:1px;height:13.6px;background:#9c9c9c;"></div>
<div class="r" style="left:771.8px;top:613.3px;width:1px;height:13.6px;background:#9c9c9c;"></div>
<div class="r" style="left:865.1px;top:613.3px;width:1px;height:13.6px;background:#9c9c9c;"></div>
<div class="r" style="left:952.8px;top:613.3px;width:1px;height:13.6px;background:#9c9c9c;"></div>
<span class="t" style="left:72.78px;top:614.00px;font-size:8.8px;line-height:14px;color:#555;transform:scaleX(1.0366);">Branch</span>
<span class="t" style="left:169.38px;top:614.00px;font-size:8.8px;line-height:14px;color:#555;transform:scaleX(1.0952);">Flow rate, kg/h</span>
<span class="t" style="left:243.18px;top:614.00px;font-size:8.8px;line-height:14px;color:#555;transform:scaleX(1.1014);">Length, m</span>
<span class="t" style="left:297.98px;top:614.00px;font-size:8.8px;line-height:14px;color:#555;transform:scaleX(1.0993);">Diameter, mm</span>
<span class="t" style="left:367.38px;top:614.00px;font-size:8.8px;line-height:14px;color:#555;transform:scaleX(1.1001);">Max. velocity, m/s</span>
<span class="t" style="left:453.78px;top:614.00px;font-size:8.8px;line-height:14px;color:#555;transform:scaleX(1.1225);">Max. density, kg/m3</span>
<span class="t" style="left:548.28px;top:614.00px;font-size:8.8px;line-height:14px;color:#555;transform:scaleX(1.0450);">Friction, kPa</span>
<span class="t" style="left:611.58px;top:614.00px;font-size:8.8px;line-height:14px;color:#555;transform:scaleX(1.0173);">Local, kPa</span>
<span class="t" style="left:666.28px;top:614.00px;font-size:8.8px;line-height:14px;color:#555;transform:scaleX(0.9830);">Elev., kPa</span>
<span class="t" style="left:720.98px;top:614.00px;font-size:8.8px;line-height:14px;color:#555;transform:scaleX(1.0507);">Total, kPa</span>
<span class="t" style="left:775.28px;top:614.00px;font-size:8.8px;line-height:14px;color:#555;transform:scaleX(1.0224);">Start pressure, MPa</span>
<span class="t" style="left:868.13px;top:614.00px;font-size:8.8px;line-height:14px;color:#555;transform:scaleX(1.0230);">End pressure, MPa</span>
<span class="t" style="left:956.38px;top:614.00px;font-size:8.8px;line-height:14px;color:#555;transform:scaleX(0.9916);">Start t.</span>
<div class="r" style="left:71px;top:626.8px;width:912.6px;height:90.6px;overflow:hidden;">
<svg style="left:2.5999999999999943px;top:2.80px" width="10" height="12" viewBox="0 0 10 12"><path d="M1.3 0.6v5.2h3.6v4.6h3.8" fill="none" stroke="#186a98" stroke-width="1.5"/></svg>
<span class="t" style="left:14.78px;top:2.00px;font-size:8.8px;line-height:14px;color:#1a1a1a;transform:scaleX(1.0200);">inlet 1-2</span>
<span class="t" style="left:100.18px;top:2.00px;font-size:8.8px;line-height:14px;color:#1a1a1a;transform:scaleX(0.9850);">445550.26</span>
<span class="t" style="left:189.45px;top:2.00px;font-size:8.8px;line-height:14px;color:#1a1a1a;transform:scaleX(0.9850);">7.24</span>
<span class="t" style="left:232.28px;top:2.00px;font-size:8.8px;line-height:14px;color:#1a1a1a;transform:scaleX(0.9850);">100</span>
<span class="t" style="left:303.54px;top:2.00px;font-size:8.8px;line-height:14px;color:#1a1a1a;transform:scaleX(0.9850);">19.13</span>
<span class="t" style="left:386.68px;top:2.00px;font-size:8.8px;line-height:14px;color:#1a1a1a;transform:scaleX(0.9850);">888.61</span>
<span class="t" style="left:479.60px;top:2.00px;font-size:8.8px;line-height:14px;color:#1a1a1a;transform:scaleX(0.9850);">301.04565</span>
<span class="t" style="left:542.70px;top:2.00px;font-size:8.8px;line-height:14px;color:#1a1a1a;transform:scaleX(0.9850);">212.02836</span>
<span class="t" style="left:651.90px;top:2.00px;font-size:8.8px;line-height:14px;color:#1a1a1a;transform:scaleX(0.9850);">513.07401</span>
<span class="t" style="left:711.18px;top:2.00px;font-size:8.8px;line-height:14px;color:#1a1a1a;transform:scaleX(0.9850);">3.20000</span>
<span class="t" style="left:804.18px;top:2.00px;font-size:8.8px;line-height:14px;color:#1a1a1a;transform:scaleX(0.9850);">2.68693</span>
<span class="t" style="left:889.58px;top:2.00px;font-size:8.8px;line-height:14px;color:#1a1a1a;transform:scaleX(0.9850);">90.00</span>
<svg style="left:2.5999999999999943px;top:15.80px" width="10" height="12" viewBox="0 0 10 12"><path d="M1.3 0.6v5.2h3.6v4.6h3.8" fill="none" stroke="#186a98" stroke-width="1.5"/></svg>
<span class="t" style="left:14.78px;top:15.00px;font-size:8.8px;line-height:14px;color:#1a1a1a;transform:scaleX(1.0200);">inlet 4-3</span>
<span class="t" style="left:100.18px;top:15.00px;font-size:8.8px;line-height:14px;color:#1a1a1a;transform:scaleX(0.9850);">379744.47</span>
<span class="t" style="left:187.04px;top:15.00px;font-size:8.8px;line-height:14px;color:#1a1a1a;transform:scaleX(0.9850);">10.24</span>
<span class="t" style="left:232.28px;top:15.00px;font-size:8.8px;line-height:14px;color:#1a1a1a;transform:scaleX(0.9850);">100</span>
<span class="t" style="left:303.54px;top:15.00px;font-size:8.8px;line-height:14px;color:#1a1a1a;transform:scaleX(0.9850);">16.54</span>
<span class="t" style="left:386.68px;top:15.00px;font-size:8.8px;line-height:14px;color:#1a1a1a;transform:scaleX(0.9850);">888.61</span>
<span class="t" style="left:479.60px;top:15.00px;font-size:8.8px;line-height:14px;color:#1a1a1a;transform:scaleX(0.9850);">300.91349</span>
<span class="t" style="left:543.02px;top:15.00px;font-size:8.8px;line-height:14px;color:#1a1a1a;transform:scaleX(0.9850);">110.54713</span>
<span class="t" style="left:652.22px;top:15.00px;font-size:8.8px;line-height:14px;color:#1a1a1a;transform:scaleX(0.9850);">411.46062</span>
<span class="t" style="left:711.18px;top:15.00px;font-size:8.8px;line-height:14px;color:#1a1a1a;transform:scaleX(0.9850);">3.20000</span>
<span class="t" style="left:804.18px;top:15.00px;font-size:8.8px;line-height:14px;color:#1a1a1a;transform:scaleX(0.9850);">2.78854</span>
<span class="t" style="left:889.58px;top:15.00px;font-size:8.8px;line-height:14px;color:#1a1a1a;transform:scaleX(0.9850);">90.00</span>
<svg style="left:2.5999999999999943px;top:29.80px" width="10" height="12" viewBox="0 0 10 12"><path d="M1.3 0.6v5.2h3.6v4.6h3.8" fill="none" stroke="#186a98" stroke-width="1.5"/></svg>
<span class="t" style="left:14.78px;top:29.00px;font-size:8.8px;line-height:14px;color:#1a1a1a;transform:scaleX(1.0200);">inlet 6-5</span>
<span class="t" style="left:100.18px;top:29.00px;font-size:8.8px;line-height:14px;color:#1a1a1a;transform:scaleX(0.9850);">350946.34</span>
<span class="t" style="left:187.04px;top:29.00px;font-size:8.8px;line-height:14px;color:#1a1a1a;transform:scaleX(0.9850);">13.24</span>
<span class="t" style="left:232.28px;top:29.00px;font-size:8.8px;line-height:14px;color:#1a1a1a;transform:scaleX(0.9850);">100</span>
<span class="t" style="left:303.54px;top:29.00px;font-size:8.8px;line-height:14px;color:#1a1a1a;transform:scaleX(0.9850);">15.51</span>
<span class="t" style="left:386.68px;top:29.00px;font-size:8.8px;line-height:14px;color:#1a1a1a;transform:scaleX(0.9850);">888.61</span>
<span class="t" style="left:479.60px;top:29.00px;font-size:8.8px;line-height:14px;color:#1a1a1a;transform:scaleX(0.9850);">336.09445</span>
<span class="t" style="left:542.70px;top:29.00px;font-size:8.8px;line-height:14px;color:#1a1a1a;transform:scaleX(0.9850);">188.40172</span>
<span class="t" style="left:651.90px;top:29.00px;font-size:8.8px;line-height:14px;color:#1a1a1a;transform:scaleX(0.9850);">524.49618</span>
<span class="t" style="left:711.18px;top:29.00px;font-size:8.8px;line-height:14px;color:#1a1a1a;transform:scaleX(0.9850);">3.20000</span>
<span class="t" style="left:804.18px;top:29.00px;font-size:8.8px;line-height:14px;color:#1a1a1a;transform:scaleX(0.9850);">2.67550</span>
<span class="t" style="left:889.58px;top:29.00px;font-size:8.8px;line-height:14px;color:#1a1a1a;transform:scaleX(0.9850);">90.00</span>
<svg style="left:2.5999999999999943px;top:43.80px" width="10" height="12" viewBox="0 0 10 12"><path d="M1.3 0.6v5.2h3.6v4.6h3.8" fill="none" stroke="#186a98" stroke-width="1.5"/></svg>
<span class="t" style="left:14.78px;top:43.00px;font-size:8.8px;line-height:14px;color:#1a1a1a;transform:scaleX(1.0200);">inlet 18-17</span>
<span class="t" style="left:100.18px;top:43.00px;font-size:8.8px;line-height:14px;color:#1a1a1a;transform:scaleX(0.9850);">323758.93</span>
<span class="t" style="left:187.04px;top:43.00px;font-size:8.8px;line-height:14px;color:#1a1a1a;transform:scaleX(0.9850);">18.24</span>
<span class="t" style="left:232.28px;top:43.00px;font-size:8.8px;line-height:14px;color:#1a1a1a;transform:scaleX(0.9850);">100</span>
<span class="t" style="left:303.54px;top:43.00px;font-size:8.8px;line-height:14px;color:#1a1a1a;transform:scaleX(0.9850);">14.53</span>
<span class="t" style="left:386.68px;top:43.00px;font-size:8.8px;line-height:14px;color:#1a1a1a;transform:scaleX(0.9850);">888.61</span>
<span class="t" style="left:479.60px;top:43.00px;font-size:8.8px;line-height:14px;color:#1a1a1a;transform:scaleX(0.9850);">387.23074</span>
<span class="t" style="left:542.70px;top:43.00px;font-size:8.8px;line-height:14px;color:#1a1a1a;transform:scaleX(0.9850);">171.12916</span>
<span class="t" style="left:651.90px;top:43.00px;font-size:8.8px;line-height:14px;color:#1a1a1a;transform:scaleX(0.9850);">558.35990</span>
<span class="t" style="left:711.18px;top:43.00px;font-size:8.8px;line-height:14px;color:#1a1a1a;transform:scaleX(0.9850);">3.20000</span>
<span class="t" style="left:804.18px;top:43.00px;font-size:8.8px;line-height:14px;color:#1a1a1a;transform:scaleX(0.9850);">2.64164</span>
<span class="t" style="left:889.58px;top:43.00px;font-size:8.8px;line-height:14px;color:#1a1a1a;transform:scaleX(0.9850);">90.00</span>
<svg style="left:2.5999999999999943px;top:56.80px" width="10" height="12" viewBox="0 0 10 12"><path d="M1.3 0.6v5.2h3.6v4.6h3.8" fill="none" stroke="#186a98" stroke-width="1.5"/></svg>
<span class="t" style="left:14.78px;top:56.00px;font-size:8.8px;line-height:14px;color:#1a1a1a;transform:scaleX(1.0200);">outlet 15-16</span>
<span class="t" style="left:100.18px;top:56.00px;font-size:8.8px;line-height:14px;color:#1a1a1a;transform:scaleX(0.9850);">500000.00</span>
<span class="t" style="left:189.45px;top:56.00px;font-size:8.8px;line-height:14px;color:#1a1a1a;transform:scaleX(0.9850);">1.00</span>
<span class="t" style="left:232.28px;top:56.00px;font-size:8.8px;line-height:14px;color:#1a1a1a;transform:scaleX(0.9850);">200</span>
<span class="t" style="left:305.95px;top:56.00px;font-size:8.8px;line-height:14px;color:#1a1a1a;transform:scaleX(0.9850);">5.23</span>
<span class="t" style="left:386.68px;top:56.00px;font-size:8.8px;line-height:14px;color:#1a1a1a;transform:scaleX(0.9850);">844.60</span>
<span class="t" style="left:484.42px;top:56.00px;font-size:8.8px;line-height:14px;color:#1a1a1a;transform:scaleX(0.9850);">1.42854</span>
<span class="t" style="left:656.72px;top:56.00px;font-size:8.8px;line-height:14px;color:#1a1a1a;transform:scaleX(0.9850);">1.42854</span>
<span class="t" style="left:711.18px;top:56.00px;font-size:8.8px;line-height:14px;color:#1a1a1a;transform:scaleX(0.9850);">2.47075</span>
<span class="t" style="left:804.18px;top:56.00px;font-size:8.8px;line-height:14px;color:#1a1a1a;transform:scaleX(0.9850);">2.46932</span>
<span class="t" style="left:887.88px;top:56.00px;font-size:8.8px;line-height:14px;color:#1a1a1a;transform:scaleX(0.9850);">130.65</span>
<svg style="left:2.5999999999999943px;top:70.80px" width="10" height="12" viewBox="0 0 10 12"><path d="M1.3 0.6v5.2h3.6v4.6h3.8" fill="none" stroke="#186a98" stroke-width="1.5"/></svg>
<span class="t" style="left:14.78px;top:70.00px;font-size:8.8px;line-height:14px;color:#1a1a1a;transform:scaleX(1.0200);">outlet 12-13</span>
<span class="t" style="left:100.18px;top:70.00px;font-size:8.8px;line-height:14px;color:#1a1a1a;transform:scaleX(0.9850);">500000.00</span>
<span class="t" style="left:189.45px;top:70.00px;font-size:8.8px;line-height:14px;color:#1a1a1a;transform:scaleX(0.9850);">1.00</span>
<span class="t" style="left:232.28px;top:70.00px;font-size:8.8px;line-height:14px;color:#1a1a1a;transform:scaleX(0.9850);">200</span>
<span class="t" style="left:305.95px;top:70.00px;font-size:8.8px;line-height:14px;color:#1a1a1a;transform:scaleX(0.9850);">5.30</span>
<span class="t" style="left:386.68px;top:70.00px;font-size:8.8px;line-height:14px;color:#1a1a1a;transform:scaleX(0.9850);">833.73</span>
<span class="t" style="left:484.42px;top:70.00px;font-size:8.8px;line-height:14px;color:#1a1a1a;transform:scaleX(0.9850);">1.44716</span>
<span class="t" style="left:656.72px;top:70.00px;font-size:8.8px;line-height:14px;color:#1a1a1a;transform:scaleX(0.9850);">1.44716</span>
<span class="t" style="left:711.18px;top:70.00px;font-size:8.8px;line-height:14px;color:#1a1a1a;transform:scaleX(0.9850);">2.46150</span>
<span class="t" style="left:804.18px;top:70.00px;font-size:8.8px;line-height:14px;color:#1a1a1a;transform:scaleX(0.9850);">2.46006</span>
<span class="t" style="left:887.88px;top:70.00px;font-size:8.8px;line-height:14px;color:#1a1a1a;transform:scaleX(0.9850);">140.41</span>
<svg style="left:2.5999999999999943px;top:84.80px" width="10" height="12" viewBox="0 0 10 12"><path d="M1.3 0.6v5.2h3.6v4.6h3.8" fill="none" stroke="#186a98" stroke-width="1.5"/></svg>
<span class="t" style="left:14.78px;top:84.00px;font-size:8.8px;line-height:14px;color:#1a1a1a;transform:scaleX(1.0200);">outlet 9-10</span>
<span class="t" style="left:100.18px;top:84.00px;font-size:8.8px;line-height:14px;color:#1a1a1a;transform:scaleX(0.9850);">500000.00</span>
<span class="t" style="left:189.45px;top:84.00px;font-size:8.8px;line-height:14px;color:#1a1a1a;transform:scaleX(0.9850);">1.00</span>
<span class="t" style="left:232.28px;top:84.00px;font-size:8.8px;line-height:14px;color:#1a1a1a;transform:scaleX(0.9850);">200</span>
<span class="t" style="left:305.95px;top:84.00px;font-size:8.8px;line-height:14px;color:#1a1a1a;transform:scaleX(0.9850);">5.16</span>
<span class="t" style="left:386.68px;top:84.00px;font-size:8.8px;line-height:14px;color:#1a1a1a;transform:scaleX(0.9850);">856.85</span>
<span class="t" style="left:484.42px;top:84.00px;font-size:8.8px;line-height:14px;color:#1a1a1a;transform:scaleX(0.9850);">1.40784</span>
<span class="t" style="left:656.72px;top:84.00px;font-size:8.8px;line-height:14px;color:#1a1a1a;transform:scaleX(0.9850);">1.40784</span>
<span class="t" style="left:711.18px;top:84.00px;font-size:8.8px;line-height:14px;color:#1a1a1a;transform:scaleX(0.9850);">2.51112</span>
<span class="t" style="left:804.18px;top:84.00px;font-size:8.8px;line-height:14px;color:#1a1a1a;transform:scaleX(0.9850);">2.50972</span>
<span class="t" style="left:887.88px;top:84.00px;font-size:8.8px;line-height:14px;color:#1a1a1a;transform:scaleX(0.9850);">110.26</span>
</div>
<div class="r" style="left:984.5px;top:613.3px;width:12.8px;height:104.1px;background:#f0f0f0;"></div>
<div class="r" style="left:984.5px;top:627.3px;width:12.8px;height:23px;background:#cdcdcd;"></div>
<svg style="left:984.5px;top:613.3px" width="13" height="104" viewBox="0 0 13 104"><g fill="none" stroke="#404040" stroke-width="1.5"><path d="M3.6 9.4l3-3 3 3"/><path d="M3.6 95.3l3 3 3-3"/></g></svg>
<div class="r" style="left:71px;top:717.4px;width:926.3px;height:12.6px;background:#f0f0f0;"></div>
<div class="r" style="left:84px;top:717.4px;width:701.6px;height:12.6px;background:#cdcdcd;"></div>
<svg style="left:71px;top:717.4px" width="926" height="13" viewBox="0 0 926 13"><g fill="none" stroke="#404040" stroke-width="1.5"><path d="M8 3.4l-2.8 2.9 2.8 2.9"/><path d="M904.6 3.4l2.8 2.9-2.8 2.9"/></g></svg>
<div class="r" style="left:71.5px;top:747.2px;width:925.3px;height:4px;background:#fff;"></div>
<div class="r" style="left:71.5px;top:751.2px;width:925.3px;height:22.3px;background:#ebebeb;"></div>
<div class="r" style="left:72px;top:751.2px;width:70.3px;height:20.6px;background:#eeeeee;"></div>
<div class="r" style="left:143px;top:750.5px;width:136.8px;height:21px;background:#fff;box-shadow:-1px 0 0 #d9d9d9,1px 0 0 #d9d9d9;"></div>
<div class="r" style="left:383.8px;top:752px;width:1px;height:19.5px;background:#d4d4d4;"></div>
<div class="r" style="left:461.0px;top:752px;width:1px;height:19.5px;background:#d4d4d4;"></div>
<div class="r" style="left:585.3px;top:752px;width:1px;height:19.5px;background:#d4d4d4;"></div>
<span class="t" style="left:78.08px;top:756.00px;font-size:9.6px;line-height:14px;color:#666;transform:scaleX(1.0070);">Input data list</span>
<span class="t" style="left:146.33px;top:756.00px;font-size:9.6px;line-height:14px;color:#4a4a4a;">Heat and hydraulic calculation</span>
<span class="t" style="left:285.83px;top:756.00px;font-size:9.6px;line-height:14px;color:#666;transform:scaleX(0.9745);">Waterhammer Results</span>
<span class="t" style="left:389.08px;top:756.00px;font-size:9.6px;line-height:14px;color:#666;">Calculation Log</span>
<span class="t" style="left:466.08px;top:756.00px;font-size:9.6px;line-height:14px;color:#666;">Control/Target Parameters</span>
<div class="r" style="left:0px;top:773.3px;width:1024px;height:15.7px;background:linear-gradient(#f3f3f3,#e2e2e2 35%,#cccccc 80%,#c2c2c2);border-top:1px solid #c9c9c9;border-bottom:1.5px solid #8e8e8e;"></div>
<div class="r" style="left:692.5px;top:776px;width:1px;height:11px;background:#c0c0c0;"></div>
<div class="r" style="left:693.5px;top:776px;width:1px;height:11px;background:#f4f4f4;"></div>
<div class="r" style="left:940.7px;top:776px;width:1px;height:11px;background:#c0c0c0;"></div>
<div class="r" style="left:941.7px;top:776px;width:1px;height:11px;background:#f4f4f4;"></div>
<div class="r" style="left:970.1px;top:776px;width:1px;height:11px;background:#c0c0c0;"></div>
<div class="r" style="left:971.1px;top:776px;width:1px;height:11px;background:#f4f4f4;"></div>
<div class="r" style="left:998.7px;top:776px;width:1px;height:11px;background:#c0c0c0;"></div>
<div class="r" style="left:999.7px;top:776px;width:1px;height:11px;background:#f4f4f4;"></div>
<span class="t" style="left:971.63px;top:776.00px;font-size:9.6px;line-height:14px;color:#333;transform:scaleX(1.0200);">NUM</span>
<!-- 40_icons_top -->
<svg style="left:11.2px;top:41.3px" width="10" height="12" viewBox="0 0 10 12"><defs><linearGradient id="ipg" x1="0" y1="0" x2="1" y2="1"><stop offset="0" stop-color="#fff"/><stop offset="1" stop-color="#d8daee"/></linearGradient></defs><path d="M0.7 0.7h5.2l2.9 2.9v7.6H0.7z" fill="url(#ipg)" stroke="#55596a" stroke-width="1"/><path d="M5.9 0.7v2.9h2.9" fill="#e8e8f0" stroke="#3a3a48" stroke-width="0.9"/></svg>
<svg style="left:27.8px;top:41.099999999999994px" width="13.5" height="12" viewBox="0 0 13.5 12"><path d="M8 2.6c1-1.8 3-2 4.2-0.6" fill="none" stroke="#707684" stroke-width="1.3"/><path d="M11.2 0.6l1.6 2.2-2.6 0.4z" fill="#707684"/><path d="M0.8 3h3.6l1 1.2h5.4v6.6H0.8z" fill="#c8a838" stroke="#8a7420" stroke-width="0.8"/><path d="M0.8 10.8L3 5.6h9.8l-2.2 5.2z" fill="#f0d060" stroke="#9a8428" stroke-width="0.8"/></svg>
<svg style="left:52.2px;top:41.3px" width="12" height="12" viewBox="0 0 12 12"><rect x="0.5" y="0.5" width="10.6" height="10.8" fill="#4a4aa6" stroke="#34347a" stroke-width="0.8"/><rect x="2.8" y="0.9" width="6" height="4.4" fill="#e6e8fa"/><rect x="2.4" y="7.2" width="6.6" height="4" fill="#34347e"/><rect x="6.2" y="8" width="1.8" height="2.6" fill="#e0e2f6"/></svg>
<svg style="left:74.8px;top:41.3px" width="12" height="12" viewBox="0 0 12 12"><rect x="0.5" y="0.5" width="10.8" height="11" rx="0.8" fill="#6a78d0" stroke="#3c4696" stroke-width="0.9"/><rect x="0.9" y="0.9" width="10" height="2.4" fill="#3a40a0"/><g stroke="#c8d2ff" stroke-width="0.9"><path d="M1 5.2h9.8M1 7.4h9.8M1 9.6h9.8"/></g><g stroke="#4a56b4" stroke-width="0.8"><path d="M3.4 3.6v7.6M5.9 3.6v7.6M8.4 3.6v7.6"/></g></svg>
<svg style="left:92px;top:46.6px" width="5" height="3" viewBox="0 0 5 3"><path d="M0.2 0.4h4.4L2.4 2.9z" fill="#111"/></svg>
<svg style="left:106.2px;top:41.3px" width="12" height="12" viewBox="0 0 12 12"><rect x="0.6" y="0.6" width="10.6" height="10.6" rx="1.4" fill="#cfe0fa" stroke="#5a8ec0" stroke-width="1"/><path d="M1 2.2a1.2 1.2 0 0 1 1.2-1.2h7.4a1.2 1.2 0 0 1 1.2 1.2v1.6H1z" fill="#2e8cd0"/><path d="M1.6 6.4h8.6M1.6 8.6h8.6" stroke="#e8c8d8" stroke-width="0.7"/></svg>
<svg style="left:124.4px;top:46.6px" width="5" height="3" viewBox="0 0 5 3"><path d="M0.2 0.4h4.4L2.4 2.9z" fill="#111"/></svg>
<svg style="left:138.6px;top:41.3px" width="13" height="12" viewBox="0 0 13 12"><path d="M3.4 0.8h6.4l1.2 3.4H2.2z" fill="#e6ecf6" stroke="#5a6a86" stroke-width="0.8"/><path d="M0.6 4.6l1.8-0.6h8.2l1.6 0.6v5.6H0.6z" fill="#8a9cbc" stroke="#46546e" stroke-width="0.8"/><rect x="1.6" y="6.6" width="8.4" height="2" fill="#f2f4fa"/><path d="M0.8 10.4h11.2v1H0.8z" fill="#56647e"/></svg>
<svg style="left:157px;top:41.3px" width="12.4" height="12" viewBox="0 0 12.4 12"><path d="M0.7 0.7h6l3 3v7.4H0.7z" fill="#f8f8fc" stroke="#6a6a72" stroke-width="0.9"/><path d="M6.4 0.8c2.4 0.6 3.4 2.6 3.4 4.2" fill="none" stroke="#40444c" stroke-width="1.3"/><circle cx="6.4" cy="6.6" r="2.6" fill="#eef0f4" stroke="#8a8e96" stroke-width="1.1"/><path d="M8.2 8.6l3.4 2.8H6.8z" fill="#b0a494"/></svg>
<svg style="left:180.4px;top:41.3px" width="13.4" height="12" viewBox="0 0 13.4 12"><path d="M1.6 10.8l7.6-7.6" stroke="#8a8468" stroke-width="1.7"/><path d="M11 10.8L3.6 3.4" stroke="#6c88b4" stroke-width="1.7"/><path d="M1 3.6c0-1.6 1.4-2.8 3-2.6l-1.2 1.6 1.4 1.4L5.8 2.8c0.2 1.6-1 3-2.6 3z" fill="#5c80b8"/><path d="M8 1l3.6 0.4 1 2.4-1.6 0.8-1.8-1.8z" fill="#7a9cd0" stroke="#4a6a9a" stroke-width="0.5"/></svg>
<svg style="left:199.4px;top:41.099999999999994px" width="12.6" height="12.6" viewBox="0 0 12.6 12.6"><defs><radialGradient id="ihg" cx="0.4" cy="0.3" r="0.8"><stop offset="0" stop-color="#4a8af0"/><stop offset="1" stop-color="#1440a8"/></radialGradient></defs><circle cx="6.2" cy="6.2" r="5.6" fill="url(#ihg)" stroke="#8aa8e0" stroke-width="0.9"/><text x="6.2" y="9.4" font-family="Liberation Sans, sans-serif" font-size="9" font-weight="bold" text-anchor="middle" fill="#dcecff">?</text></svg>
<svg style="left:234.6px;top:41.3px" width="12" height="12" viewBox="0 0 12 12"><path d="M1.2 1.2l9.2 10" stroke="#7a4a4a" stroke-width="1.3" fill="none"/><path d="M10.4 1.4C7 4 4 7.4 1.8 10.6" stroke="#a81c1c" stroke-width="1.9" fill="none" stroke-linecap="round"/></svg>
<svg style="left:260.2px;top:41.3px" width="8.4" height="12.4" viewBox="0 0 8.4 12.4"><path d="M2.2 0.6l2.6 6.6M6.2 0.6l-2.6 6.6" stroke="#5a6270" stroke-width="1.5" fill="none"/><ellipse cx="2.4" cy="9.4" rx="1.8" ry="2" fill="#6a94dc" stroke="#2c56a4" stroke-width="1.1"/><ellipse cx="6" cy="9.4" rx="1.8" ry="2" fill="#6a94dc" stroke="#2c56a4" stroke-width="1.1"/></svg>
<svg style="left:276.6px;top:41.699999999999996px" width="12.4" height="12.4" viewBox="0 0 12.4 12.4"><defs><linearGradient id="icp" x1="0" y1="0" x2="1" y2="1"><stop offset="0" stop-color="#e4ecfa"/><stop offset="1" stop-color="#8aa8dc"/></linearGradient></defs><path d="M0.6 0.6h4.6l2 2v5.6H0.6z" fill="url(#icp)" stroke="#7a92c0" stroke-width="0.8"/><path d="M5 4h4.6l2 2v5.6H5z" fill="url(#icp)" stroke="#4a6eb0" stroke-width="0.9"/><path d="M6.2 8h4M6.2 9.8h4" stroke="#f0f4fc" stroke-width="0.8"/></svg>
<svg style="left:295.4px;top:41.3px" width="12.6" height="12.4" viewBox="0 0 12.6 12.4"><g opacity="0.75"><rect x="0.6" y="1.6" width="8.6" height="9.6" fill="#e0bcbc" stroke="#c8a0a0" stroke-width="0.9"/><rect x="2.8" y="0.4" width="4.2" height="2.4" fill="#d0a8a8"/><path d="M5.2 4.6h4.8l2 2v5H5.2z" fill="#f0dede" stroke="#c8a4a4" stroke-width="0.9"/></g></svg>
<svg style="left:318.4px;top:41.3px" width="13" height="12.4" viewBox="0 0 13 12.4"><path d="M2.4 11L11.6 2.6" stroke="#4a5cc0" stroke-width="1.3"/><path d="M5.6 8.6c1 -1.6 2.4 -1.4 3.4 -3" stroke="#8a9ae0" stroke-width="2.6" fill="none" opacity="0.7"/><circle cx="3.2" cy="3.2" r="2.7" fill="#e8d83a" stroke="#a89a20" stroke-width="0.8"/><circle cx="2.6" cy="2.6" r="1" fill="#fcf8a0"/></svg>
<svg style="left:337.6px;top:41.3px" width="12" height="12" viewBox="0 0 12 12"><rect x="0.6" y="5" width="10.8" height="2.2" rx="1" fill="#b4a4a4"/></svg>
<svg style="left:355px;top:41.3px" width="13" height="12.4" viewBox="0 0 13 12.4"><path d="M2.4 11L11.6 2.6" stroke="#4a5cc0" stroke-width="1.3"/><path d="M5.6 8.6c1 -1.6 2.4 -1.4 3.4 -3" stroke="#8a9ae0" stroke-width="2.6" fill="none" opacity="0.7"/><circle cx="3.2" cy="3.2" r="2.7" fill="#e8d83a" stroke="#a89a20" stroke-width="0.8"/><circle cx="2.6" cy="2.6" r="1" fill="#fcf8a0"/></svg>
<svg style="left:380px;top:41.3px" width="11" height="12" viewBox="0 0 11 12"><path d="M3 4.8c3-2.2 6.6-1 6.6 2.2 0 2-1.4 3.6-3.6 4.2" fill="none" stroke="#2e5cc0" stroke-width="2"/><path d="M0.6 2.2l4.6 0.4-3 3.8z" fill="#2e5cc0"/></svg>
<svg style="left:399.4px;top:41.3px" width="11" height="12" viewBox="0 0 11 12"><g opacity="0.8"><path d="M7.6 4.8c-3-2.2-6.6-1-6.6 2.2 0 2 1.4 3.6 3.6 4.2" fill="none" stroke="#dcb4b4" stroke-width="2"/><path d="M10 2.2l-4.6 0.4 3 3.8z" fill="#dcb4b4"/></g></svg>
<svg style="left:431.4px;top:42.9px" width="7" height="10" viewBox="0 0 7 10"><path d="M0.6 0.4l5.4 4.4-5.4 4.4z" fill="#2ca02c" stroke="#1a7a1a" stroke-width="0.6"/></svg>
<svg style="left:450.2px;top:43.3px" width="6" height="9" viewBox="0 0 6 9"><rect x="0.4" y="0.4" width="1.9" height="7.6" fill="#d4b8b8"/><rect x="3.6" y="0.4" width="1.9" height="7.6" fill="#d4b8b8"/></svg>
<svg style="left:467.8px;top:42.9px" width="7" height="10" viewBox="0 0 7 10"><rect x="0.3" y="0.3" width="1.5" height="9" fill="#d0b0b0"/><path d="M6.4 0.6L2.2 4.8l4.2 4.2z" fill="#d8bcbc"/></svg>
<svg style="left:483.2px;top:41.099999999999994px" width="11.4" height="12.6" viewBox="0 0 11.4 12.6"><path d="M3.6 7.2V1.8a0.85 0.85 0 0 1 1.7 0V5.6M5.3 5.8V4.8a0.8 0.8 0 0 1 1.6 0V6M6.9 6.2V5.4a0.8 0.8 0 0 1 1.6 0V6.6M8.5 6.8V6.2a0.8 0.8 0 0 1 1.6 0V8.6c0 1.8-1 3.2-2.8 3.2H6c-1.4 0-2.2-0.6-2.9-1.7L1.2 7.6c-0.5-0.9 0.6-1.6 1.3-0.9l1.1 1.1" fill="#fff" stroke="#1c1c1c" stroke-width="1"/></svg>
<svg style="left:507.3px;top:41.2px;opacity:1" width="12" height="13" viewBox="0 0 12 13"><rect x="0.6" y="0.6" width="10.6" height="11.2" fill="#eeeefc" stroke="#5a5a9e" stroke-width="1.2"/><text x="5.9" y="9.6" font-family="Liberation Sans, sans-serif" font-size="9.6" font-weight="bold" text-anchor="middle" fill="#2a2a66">P</text></svg>
<svg style="left:525.8px;top:41.2px;opacity:1" width="12" height="13" viewBox="0 0 12 13"><rect x="0.6" y="0.6" width="10.6" height="11.2" fill="#eef8f0" stroke="#5a5a8e" stroke-width="1.2"/><text x="5.9" y="9.6" font-family="Liberation Sans, sans-serif" font-size="9.6" font-weight="bold" text-anchor="middle" fill="#6aa870">H</text></svg>
<svg style="left:544.3px;top:41.2px;opacity:1" width="12" height="13" viewBox="0 0 12 13"><rect x="0.6" y="0.6" width="10.6" height="11.2" fill="#d4e6fa" stroke="#5a5a9e" stroke-width="1.2"/><text x="5.9" y="9.6" font-family="Liberation Sans, sans-serif" font-size="9.2" font-weight="bold" text-anchor="middle" fill="#1c5a96">W</text></svg>
<svg style="left:562.7px;top:41.2px;opacity:1" width="12" height="13" viewBox="0 0 12 13"><rect x="0.6" y="0.6" width="10.6" height="11.2" fill="#f6f0e0" stroke="#5050a0" stroke-width="1.2"/><text x="5.9" y="9.6" font-family="Liberation Sans, sans-serif" font-size="9.6" font-weight="bold" text-anchor="middle" fill="#7c6a28">G</text></svg>
<svg style="left:581.2px;top:41.2px;opacity:0.85" width="12" height="13" viewBox="0 0 12 13"><rect x="0.6" y="0.6" width="10.6" height="11.2" fill="#f8f2f4" stroke="#bcaeb0" stroke-width="1.2"/><text x="5.9" y="9.6" font-family="Liberation Sans, sans-serif" font-size="9.6" font-weight="bold" text-anchor="middle" fill="#b0a0a2">C</text></svg>
<svg style="left:599.6px;top:41.2px;opacity:1" width="12" height="13" viewBox="0 0 12 13"><rect x="0.6" y="0.6" width="10.6" height="11.2" fill="#f4ecf6" stroke="#5a5a9e" stroke-width="1.2"/><text x="5.1000000000000005" y="9.6" font-family="Liberation Sans, sans-serif" font-size="9.6" font-weight="bold" text-anchor="middle" fill="#d0584a">P</text><text x="8.2" y="10.6" font-family="Liberation Sans, sans-serif" font-size="5" font-weight="bold" fill="#4a4a8a">1</text></svg>
<svg style="left:618.1px;top:41.2px;opacity:1" width="12" height="13" viewBox="0 0 12 13"><rect x="0.6" y="0.6" width="10.6" height="11.2" fill="#f8e8ec" stroke="#5a5a9e" stroke-width="1.2"/><text x="5.300000000000001" y="9.6" font-family="Liberation Sans, sans-serif" font-size="9.6" font-weight="bold" text-anchor="middle" fill="#d06a4a">P</text><path d="M8.8 0.8h2.4v3" fill="#6a6ab0"/></svg>
<svg style="left:641px;top:41.3px" width="12.6" height="12" viewBox="0 0 12.6 12"><g opacity="0.85" fill="none" stroke="#c0a8a8" stroke-width="0.9"><path d="M2 0.6v10.6M0.4 2h11.6M0.4 9.6h11.6"/><path d="M2 8l2.6-4 2.4 3.4 2.6-3.6 2 1.6" stroke="#a89a9a" stroke-width="1.1"/></g></svg>
<svg style="left:658px;top:46.6px" width="5" height="3" viewBox="0 0 5 3"><path d="M0.2 0.4h4.4L2.4 2.9z" fill="#8a8484"/></svg>
<div class="r" style="left:407.2px;top:78.8px;width:178.2px;height:36.2px;background:#f5f5f8;border:1.2px solid #6e6e6e;"></div>
<div class="r" style="left:408.4px;top:80px;width:175.8px;height:0.8px;background:#a8a8a8;"></div>
<div class="r" style="left:408.4px;top:80.8px;width:175.8px;height:13.6px;background:#6e6e6e;"></div>
<span class="t" style="left:411.63px;top:82.00px;font-size:9.6px;line-height:14px;color:#fff;font-weight:bold;transform:scaleX(0.9752);">Result View Toolbar</span>
<svg style="left:558.6px;top:85.8px" width="6" height="4" viewBox="0 0 6 4"><path d="M0.3 0.4h5L2.8 3.2z" fill="#fff"/></svg>
<svg style="left:571.6px;top:83.2px" width="8" height="8" viewBox="0 0 8 8"><path d="M1 1l6 6M7 1l-6 6" stroke="#fff" stroke-width="1.5" fill="none"/></svg>
<div class="r" style="left:466.9px;top:95.2px;width:17.6px;height:18.4px;background:#fce9b4;border:1.6px solid #f9cc55;"></div>
<svg style="left:414.2px;top:98.0px;opacity:1" width="12" height="13" viewBox="0 0 12 13"><rect x="0.6" y="0.6" width="10.6" height="11.2" fill="#eeeefc" stroke="#5a5aa0" stroke-width="1.2"/><text x="7.1000000000000005" y="9.6" font-family="Liberation Sans, sans-serif" font-size="8.6" font-weight="bold" text-anchor="middle" fill="#2a2a8a">P</text><path d="M1.8 10.6l2.2-3" stroke="#2a2a8a" stroke-width="1"/><text x="1.6" y="9.6" font-family="Liberation Sans, sans-serif" font-size="4.6" fill="#2a2a8a">a</text></svg>
<svg style="left:432.6px;top:98.0px;opacity:1" width="12" height="13" viewBox="0 0 12 13"><rect x="0.6" y="0.6" width="10.6" height="11.2" fill="#eeeefc" stroke="#5a5aa0" stroke-width="1.2"/><text x="5.9" y="9.6" font-family="Liberation Sans, sans-serif" font-size="9.6" font-weight="bold" text-anchor="middle" fill="#2a2a8a">P</text></svg>
<svg style="left:451.0px;top:98.0px;opacity:1" width="12" height="13" viewBox="0 0 12 13"><rect x="0.6" y="0.6" width="10.6" height="11.2" fill="#f6f0e0" stroke="#5a5aa0" stroke-width="1.2"/><text x="5.9" y="9.6" font-family="Liberation Sans, sans-serif" font-size="9.6" font-weight="bold" text-anchor="middle" fill="#7c6a28">G</text></svg>
<svg style="left:469.8px;top:98.0px;opacity:1" width="12" height="13" viewBox="0 0 12 13"><rect x="0.6" y="0.6" width="10.6" height="11.2" fill="#f4f4fc" stroke="#34348a" stroke-width="1.2"/><text x="5.9" y="9.799999999999999" font-family="Liberation Sans, sans-serif" font-size="10.6" font-weight="bold" text-anchor="middle" fill="#1414a0">t</text></svg>
<svg style="left:488px;top:98.0px;opacity:0.9" width="12" height="13" viewBox="0 0 12 13"><rect x="0.6" y="0.6" width="10.6" height="11.2" fill="#f8f0f2" stroke="#c8b4b6" stroke-width="1.2"/><text x="5.9" y="9.0" font-family="Liberation Sans, sans-serif" font-size="7" font-weight="bold" text-anchor="middle" fill="#d4b8ba">FP</text></svg>
<svg style="left:506.8px;top:98.0px;opacity:0.9" width="12" height="13" viewBox="0 0 12 13"><rect x="0.6" y="0.6" width="10.6" height="11.2" fill="#f8f2f2" stroke="#c8b4b6" stroke-width="1.2"/><text x="5.9" y="9.4" font-family="Liberation Sans, sans-serif" font-size="9.6" font-weight="normal" text-anchor="middle" fill="#c8a8a8">x</text></svg>
<svg style="left:525px;top:98.0px;opacity:1" width="12" height="13" viewBox="0 0 12 13"><rect x="0.6" y="0.6" width="10.6" height="11.2" fill="#d4e6fa" stroke="#5a5a9e" stroke-width="1.2"/><text x="5.9" y="9.6" font-family="Liberation Sans, sans-serif" font-size="9.2" font-weight="bold" text-anchor="middle" fill="#1c5a96">W</text></svg>
<svg style="left:543.3px;top:98.0px;opacity:1" width="12" height="13" viewBox="0 0 12 13"><rect x="0.6" y="0.6" width="10.6" height="11.2" fill="#f6f0e0" stroke="#5a5a9e" stroke-width="1.2"/><text x="5.9" y="9.6" font-family="Liberation Sans, sans-serif" font-size="9.6" font-weight="bold" text-anchor="middle" fill="#7c5a1c">Q</text></svg>
<div class="r" style="left:560px;top:98px;width:1px;height:13.6px;background:#c4c4c4;"></div>
<svg style="left:567.6px;top:98.0px" width="10" height="12.6" viewBox="0 0 10 12.6"><g opacity="0.8"><path d="M3.6 0.6h2.4v4.2c1.6 0.8 2.8 2.2 2.8 4 0 1.8-1.8 3-4 3s-4-1.2-4-3c0-1.8 1.2-3.2 2.8-4z" fill="#e8d4d4" stroke="#b89c9c" stroke-width="0.8"/><path d="M4.8 2v8" stroke="#a88484" stroke-width="1"/><path d="M1.2 8.4h7.2" stroke="#c0a0a0" stroke-width="0.8"/></g></svg>
<!-- 41_icons_left -->
<svg style="left:4.4px;top:71.4px" width="14" height="13" viewBox="0 0 14 13"><g fill="none" stroke="#1c5c74" stroke-width="1.6"><path d="M0.6 1.6h9.2M4.8 1.6v7.2M0.6 8.8h10.6M9 1.6v3.2h4.2M10.4 8.8v3.2"/></g></svg>
<svg style="left:6.6px;top:89.2px" width="11" height="13" viewBox="0 0 11 13"><path d="M1.2 0.4v5.6h4.4v5.2h4.2" fill="none" stroke="#1c5c74" stroke-width="1.7"/></svg>
<svg style="left:4.4px;top:107.6px" width="14" height="12.4" viewBox="0 0 14 12.4"><defs><linearGradient id="lpk" x1="0" y1="0" x2="0" y2="1"><stop offset="0" stop-color="#c8b0b0"/><stop offset="0.5" stop-color="#b09494"/><stop offset="1" stop-color="#c4acac"/></linearGradient></defs><path d="M4.6 0.4h4.6v5.4h4.4v6H0.4v-6h4.2z" fill="url(#lpk)"/></svg>
<svg style="left:6.4px;top:131.2px" width="9.4" height="12" viewBox="0 0 9.4 12"><defs><radialGradient id="lfl" cx="0.4" cy="0.35" r="0.7"><stop offset="0" stop-color="#9cc4f0"/><stop offset="1" stop-color="#2a6cc0"/></radialGradient></defs><path d="M3.4 0.5h2.6v3.6c1.6 0.7 2.6 2 2.6 3.6 0 2-1.8 3.6-4 3.6s-4-1.6-4-3.6c0-1.6 1-2.9 2.8-3.6z" fill="#e4e8f4" stroke="#8a8aa0" stroke-width="0.8"/><path d="M1.2 6.8h6.8c0.2 2.2-1.4 4-3.4 4s-3.6-1.8-3.4-4z" fill="url(#lfl)"/></svg>
<svg style="left:7.8px;top:149.8px" width="6.4" height="12" viewBox="0 0 6.4 12"><path d="M0.6 0.6h5v8.2a2.5 2.5 0 0 1-5 0z" fill="#f4ecec" stroke="#a08c8c" stroke-width="1.1"/><path d="M1.4 6.4h3.4v2.6a1.7 1.7 0 0 1-3.4 0z" fill="#b8a0a0"/><path d="M0.2 0.7h5.8" stroke="#8a7878" stroke-width="1.2"/></svg>
<svg style="left:4.6px;top:176px" width="13.6" height="7.6" viewBox="0 0 13.6 7.6"><rect x="0.4" y="0.4" width="12.6" height="6.6" rx="2.2" fill="url(#lpk)" stroke="#a89090" stroke-width="0.5"/></svg>
<svg style="left:4.4px;top:193px" width="13.6" height="7.6" viewBox="0 0 13.6 7.6"><rect x="3.6" y="0.4" width="9.6" height="6.6" rx="2" fill="url(#lpk)"/><path d="M0.4 3.6h3.4M1.8 2.4L0.4 3.6l1.4 1.2" stroke="#b09898" stroke-width="0.9" fill="none"/></svg>
<svg style="left:4.6px;top:211.8px" width="13.6" height="7.6" viewBox="0 0 13.6 7.6"><rect x="0.4" y="0.4" width="9.6" height="6.6" rx="2" fill="url(#lpk)"/><path d="M10 3.6h3.2M11.8 2.4l1.4 1.2-1.4 1.2" stroke="#a08888" stroke-width="0.9" fill="none"/></svg>
<svg style="left:6px;top:234.6px" width="11.4" height="10" viewBox="0 0 11.4 10"><path d="M0.6 9.2c0-4.8 3.6-8.6 10.2-8.6v4.6c-3.6 0-5.2 1.6-5.2 4z" fill="url(#lpk)" stroke="#a89090" stroke-width="0.5"/></svg>
<svg style="left:5.8px;top:252.8px" width="10.4" height="10.2" viewBox="0 0 10.4 10.2"><path d="M0.5 0.5h9.2v4.4H5v4.6H0.5z" fill="url(#lpk)" stroke="#a89090" stroke-width="0.4"/></svg>
<svg style="left:4px;top:277.6px" width="14" height="8" viewBox="0 0 14 8"><g stroke="#b8a0a0" fill="none"><path d="M0.4 4h3.6M9.6 4h3.8" stroke-width="1.2"/><path d="M5.4 0.4v7.2M8 0.4v7.2" stroke-width="1.4"/></g></svg>
<svg style="left:6px;top:293.6px" width="10" height="11.4" viewBox="0 0 10 11.4"><path d="M0.6 0.6l8.4 5-8.4 5z" fill="url(#lpk)" stroke="#a89090" stroke-width="0.4"/></svg>
<svg style="left:4.6px;top:313.4px" width="13.6" height="10.6" viewBox="0 0 13.6 10.6"><path d="M0.5 0.5l6.2 3.6 6.2-3.6v9.4L6.7 6.4 0.5 9.9z" fill="url(#lpk)" stroke="#a89090" stroke-width="0.4"/></svg>
<svg style="left:6px;top:331.6px" width="11" height="11.4" viewBox="0 0 11 11.4"><g fill="#b8a0a0"><rect x="2" y="0.4" width="2.2" height="10.4"/><rect x="4.8" y="0.4" width="1.4" height="10.4" fill="#c8b4b4"/><rect x="6.8" y="0.4" width="2.2" height="10.4"/><rect x="0.2" y="4.2" width="10.6" height="2.6"/></g></svg>
<svg style="left:4.8px;top:348.8px" width="14" height="12.4" viewBox="0 0 14 12.4"><g fill="none" stroke="#b8a0a0"><path d="M2.4 11.4V1.2h3v10.2" stroke-width="1.4" fill="#dccccc"/><path d="M0.4 11.4h4" stroke-width="1"/><path d="M8.6 2v8.8" stroke-width="1.1"/></g><text x="9.4" y="10.6" font-family="Liberation Sans, sans-serif" font-size="5.6" fill="#a89494">H</text></svg>
<svg style="left:4.4px;top:368px" width="13.6" height="12" viewBox="0 0 13.6 12"><rect x="4" y="0.6" width="5.2" height="10.6" rx="1.2" fill="url(#lpk)"/><rect x="0.4" y="6.4" width="12.6" height="2.4" fill="#b8a0a0"/><path d="M4.2 3h4.8M4.2 5h4.8" stroke="#d4c0c0" stroke-width="0.6"/></svg>
<svg style="left:3.6px;top:389.8px" width="14.4" height="14.4" viewBox="0 0 14.4 14.4"><circle cx="7.2" cy="7.2" r="6.5" fill="#f0de8a" opacity="0.95"/><circle cx="7.2" cy="7.2" r="4.1" fill="#fff" stroke="#3c2c50" stroke-width="2.9"/></svg>
<svg style="left:28.8px;top:71.4px" width="9" height="12.4" viewBox="0 0 9 12.4"><path d="M0.7 0.7v8.4l2.1-1.9 1.7 3.4 1.5-0.8-1.7-3.2h2.8z" fill="#fff" stroke="#5c5240" stroke-width="0.9"/></svg>
<svg style="left:26.2px;top:92.4px" width="12.6" height="12.6" viewBox="0 0 12.6 12.6"><g opacity="1"><path d="M6.6 6.8l4.6 4.6" stroke="#a89a74" stroke-width="1.9" stroke-linecap="round"/><circle cx="4.6" cy="4.6" r="3.8" fill="#b4cce8" stroke="#62748a" stroke-width="1.1"/><path d="M4.6 3v3.2M3 4.6h3.2" stroke="#3c5a8a" stroke-width="1"/></g></svg>
<svg style="left:27px;top:110.4px" width="12.4" height="12.4" viewBox="0 0 12.4 12.4"><path d="M6.2 0.2l2.4 2.6H7.2v2.4h2.4V3.8l2.6 2.4-2.6 2.4V7.2H7.2v2.4h1.4L6.2 12.2 3.8 9.6h1.4V7.2H2.8v1.4L0.2 6.2l2.6-2.4v1.4h2.4V2.8H3.8z" fill="#4a5c9e"/></svg>
<svg style="left:26.2px;top:128.4px" width="13.4" height="12.8" viewBox="0 0 13.4 12.8"><g fill="none" stroke="#3c4c8c" stroke-width="2.3"><path d="M2 5.6c0.6-2.4 2.4-3.8 4.8-3.8 1.4 0 2.6 0.4 3.6 1.4"/><path d="M11.4 7.2c-0.6 2.4-2.4 3.8-4.8 3.8-1.4 0-2.6-0.4-3.6-1.4"/></g><path d="M8.6 4.6l4.2-0.2-0.6-4z" fill="#3c4c8c"/><path d="M4.8 8.2l-4.2 0.2 0.6 4z" fill="#3c4c8c"/></svg>
<svg style="left:30.6px;top:145.2px" width="3.4" height="4.6" viewBox="0 0 3.4 4.6"><path d="M0.3 0.3l2.8 2-2.8 2z" fill="#111"/></svg>
<svg style="left:25.6px;top:159px" width="13" height="13" viewBox="0 0 13 13"><g fill="#3a3a3a"><rect x="0.6" y="4" width="1.2" height="1.2"/><rect x="0.6" y="6.8" width="1.2" height="1.2"/><rect x="1.2" y="1.2" width="1.2" height="1.2"/><rect x="3.8" y="0.4" width="1.2" height="1.2"/><rect x="6.6" y="0.4" width="1.2" height="1.2"/><rect x="9" y="1.4" width="1.2" height="1.2"/></g><path d="M8.4 8.6l3.8 3.4" stroke="#a89a74" stroke-width="1.8" stroke-linecap="round"/><circle cx="6.4" cy="6.4" r="3.1" fill="#c4d4ec" stroke="#7a8a9e" stroke-width="1"/></svg>
<svg style="left:26.2px;top:176.8px" width="12.6" height="12.6" viewBox="0 0 12.6 12.6"><g opacity="1"><path d="M6.6 6.8l4.6 4.6" stroke="#a89a74" stroke-width="1.9" stroke-linecap="round"/><circle cx="4.6" cy="4.6" r="3.8" fill="#b4cce8" stroke="#62748a" stroke-width="1.1"/><path d="M3 4.6h3.2" stroke="#3c5a8a" stroke-width="1.1"/></g></svg>
<svg style="left:26.2px;top:194.6px" width="12.4" height="11.6" viewBox="0 0 12.4 11.6"><rect x="3.4" y="3" width="5.6" height="5.6" fill="#bcd0ec"/><g fill="none" stroke="#2c3448" stroke-width="1.2"><path d="M0.6 3V0.6h2.6M9.2 0.6h2.6V3M11.8 8.6V11H9.2M3.2 11H0.6V8.6"/><path d="M2.6 0.8v10M9.8 0.8v10M0.8 2.8h10.8M0.8 9h10.8" stroke-width="0.9"/></g></svg>
<svg style="left:26.4px;top:211.8px" width="12.6" height="12.6" viewBox="0 0 12.6 12.6"><g opacity="1"><path d="M6.6 6.8l4.6 4.6" stroke="#d8c4c4" stroke-width="1.9" stroke-linecap="round"/><circle cx="4.6" cy="4.6" r="3.8" fill="#f4ecec" stroke="#d4bcbc" stroke-width="1.1"/><path d="M4.6 2.6v2.2h-1.8" stroke="#d4b8b8" stroke-width="1" fill="none"/><circle cx="9" cy="4.8" r="2.6" fill="none" stroke="#dcc4c4" stroke-width="1"/></g></svg>
<svg style="left:26px;top:234.6px" width="13.4" height="13" viewBox="0 0 13.4 13"><g fill="none" stroke="#3a66c0" stroke-width="1.1"><ellipse cx="5.4" cy="6.4" rx="1.9" ry="5.4"/><ellipse cx="5.6" cy="6.2" rx="5" ry="1.9" transform="rotate(24 5.6 6.2)"/></g><path d="M6.6 5.4l3.2-1 3 1v3.4c0 1.8-1.4 3-3 3.6-1.6-0.6-3.2-1.8-3.2-3.6z" fill="#2c9c3c" stroke="#1c7a2a" stroke-width="0.5"/><path d="M8 8.4l1.4 1.4 2.4-2.8" fill="none" stroke="#e8ffe8" stroke-width="1.1"/></svg>
<svg style="left:30.6px;top:251.4px" width="3.4" height="4.6" viewBox="0 0 3.4 4.6"><path d="M0.3 0.3l2.8 2-2.8 2z" fill="#111"/></svg>
<svg style="left:26.2px;top:276.8px" width="13.2" height="12.6" viewBox="0 0 13.2 12.6"><g fill="none" stroke="#2c4a86" stroke-width="1.1"><path d="M0.4 8.4h12.4M3.2 1.6v10M9.2 2.6v5.8"/></g><path d="M2.2 3.8l1-2.6 1 2.6zM2.2 9.6l1 2.4 1-2.4zM8.2 4.6l1-2.4 1 2.4z" fill="#2c4a86"/><circle cx="6.2" cy="8.4" r="0.9" fill="#6a8a4a"/></svg>
<svg style="left:26.2px;top:295.2px" width="13.2" height="12.6" viewBox="0 0 13.2 12.6"><rect x="1.4" y="0.2" width="10.4" height="3.4" fill="#fff" stroke="#6a6a6a" stroke-width="0.6"/><path d="M2.6 2.4h8.4" stroke="#333" stroke-width="1.4" stroke-dasharray="1.2 0.6"/><g fill="none" stroke="#2a2a2a" stroke-width="1.1"><path d="M0.4 8.4h12.4M3.2 1.6v10M9.2 2.6v5.8"/></g><path d="M2.2 3.8l1-2.6 1 2.6zM2.2 9.6l1 2.4 1-2.4zM8.2 4.6l1-2.4 1 2.4z" fill="#2a2a2a"/><circle cx="6.2" cy="8.4" r="0.9" fill="#6a8a4a"/></svg>
<svg style="left:26.4px;top:316.6px" width="14" height="13" viewBox="0 0 14 13"><circle cx="9.6" cy="3.4" r="2.6" fill="#a8b0d0" stroke="#7a84b0" stroke-width="0.6"/><path d="M12.6 1.4v3" stroke="#c89a20" stroke-width="1" stroke-dasharray="1 0.8"/><path d="M3.2 7.6l3.8-4" stroke="#3a3a30" stroke-width="1"/><path d="M7.8 7.6l2.8-3.2" stroke="#3a3a30" stroke-width="1"/><circle cx="3.6" cy="9.4" r="2.1" fill="#d8e6f4" stroke="#33362e" stroke-width="1"/><circle cx="8" cy="9.8" r="2.1" fill="#d8e6f4" stroke="#33362e" stroke-width="1"/></svg>
<svg style="left:26.4px;top:333.6px" width="14" height="13" viewBox="0 0 14 13"><path d="M6.4 4.6h6.6v3H6.4zM8.6 2.4h2.4v2.4H8.6z" fill="#1c86b8"/><rect x="0.2" y="2" width="1.2" height="1.2" fill="#c88a20"/><path d="M3.2 7.6l3.8-4" stroke="#3a3a30" stroke-width="1"/><path d="M7.8 7.6l2.8-3.2" stroke="#3a3a30" stroke-width="1"/><circle cx="3.6" cy="9.4" r="2.1" fill="#d8e6f4" stroke="#33362e" stroke-width="1"/><circle cx="8" cy="9.8" r="2.1" fill="#d8e6f4" stroke="#33362e" stroke-width="1"/></svg>
<svg style="left:26.4px;top:351.2px" width="14" height="13" viewBox="0 0 14 13"><path d="M8.2 1.2l3.4 2-3.4 2z" fill="#8a2a4a"/><path d="M8 5.6h4.6" stroke="#c84a2a" stroke-width="1.2"/><rect x="0.2" y="2.4" width="1.2" height="1.2" fill="#c88a20"/><path d="M3.2 7.6l3.8-4" stroke="#3a3a30" stroke-width="1"/><path d="M7.8 7.6l2.8-3.2" stroke="#3a3a30" stroke-width="1"/><circle cx="3.6" cy="9.4" r="2.1" fill="#d8e6f4" stroke="#33362e" stroke-width="1"/><circle cx="8" cy="9.8" r="2.1" fill="#d8e6f4" stroke="#33362e" stroke-width="1"/></svg>
<svg style="left:27.2px;top:373.4px" width="11" height="13" viewBox="0 0 11 13"><path d="M0.6 0.6h6.8l3 3v8.8H0.6z" fill="#e4e8f8" stroke="#6a7a9a" stroke-width="0.9"/><path d="M3.6 2v7.4" stroke="#1c7a2c" stroke-width="1.5"/><path d="M1.4 8.4l2.2 2.6 2-2.4" fill="none" stroke="#1c7a2c" stroke-width="1.2"/><circle cx="7.6" cy="8.4" r="2.2" fill="#b4bce0" stroke="#8a92c0" stroke-width="0.6"/></svg>
<svg style="left:28px;top:396.8px" width="9.6" height="11.6" viewBox="0 0 9.6 11.6"><path d="M0.6 0.6h5.6l2.6 2.6v7.8H0.6z" fill="#f4f8f0" stroke="#4a4a4a" stroke-width="0.9"/><path d="M2 5.4h4.4l-1.4-1.6M7 7.4H2.6l1.4 1.6" fill="none" stroke="#2c9a2c" stroke-width="1.3"/></svg>
<span class="t" style="left:26.1px;top:421.4px;font-family:'Liberation Serif',serif;font-size:10.6px;line-height:10px;font-weight:bold;color:#6a5a9c;letter-spacing:0.2px;">2D</span>
<span class="t" style="left:26.1px;top:443.8px;font-family:'Liberation Serif',serif;font-size:10.6px;line-height:10px;font-weight:bold;color:#8c5c44;letter-spacing:0.2px;">3D</span>
<svg style="left:73.4px;top:595.8px" width="12.6" height="11.6" viewBox="0 0 12.6 11.6"><g opacity="0.9"><rect x="0.5" y="0.5" width="11.6" height="10.6" fill="#f0e4e4" stroke="#b8a0a0" stroke-width="0.9"/><path d="M0.6 3h11.4M0.6 5.2h11.4M0.6 7.4h11.4M0.6 9.4h11.4" stroke="#c4a8a8" stroke-width="0.7"/></g></svg>
<svg style="left:93.2px;top:595.2px" width="9.2" height="12" viewBox="0 0 9.2 12"><g opacity="0.9"><path d="M3.2 0.5h2.6v3.8c1.6 0.7 2.6 1.9 2.6 3.5 0 2-1.8 3.6-3.9 3.6S0.6 9.8 0.6 7.8c0-1.6 1-2.8 2.6-3.5z" fill="#ecdcdc" stroke="#b89c9c" stroke-width="0.8"/><path d="M1.2 7.6h6.6c0 2-1.4 3.2-3.3 3.2S1.2 9.6 1.2 7.6z" fill="#d0b4b4"/></g></svg>
<svg style="left:111.6px;top:595.2px" width="9.2" height="12" viewBox="0 0 9.2 12"><g opacity="0.9"><path d="M3.2 0.5h2.6v3.8c1.6 0.7 2.6 1.9 2.6 3.5 0 2-1.8 3.6-3.9 3.6S0.6 9.8 0.6 7.8c0-1.6 1-2.8 2.6-3.5z" fill="#ecdcdc" stroke="#b89c9c" stroke-width="0.8"/><path d="M1.2 7.6h6.6c0 2-1.4 3.2-3.3 3.2S1.2 9.6 1.2 7.6z" fill="#d0b4b4"/></g></svg>
<svg style="left:130.2px;top:595.2px" width="9.2" height="12" viewBox="0 0 9.2 12"><g opacity="0.9"><path d="M3.2 0.5h2.6v3.8c1.6 0.7 2.6 1.9 2.6 3.5 0 2-1.8 3.6-3.9 3.6S0.6 9.8 0.6 7.8c0-1.6 1-2.8 2.6-3.5z" fill="#ecdcdc" stroke="#b89c9c" stroke-width="0.8"/><path d="M1.2 7.6h6.6c0 2-1.4 3.2-3.3 3.2S1.2 9.6 1.2 7.6z" fill="#d0b4b4"/></g></svg>
<svg style="left:148.6px;top:595.2px" width="9.2" height="12" viewBox="0 0 9.2 12"><g opacity="0.9"><path d="M3.2 0.5h2.6v3.8c1.6 0.7 2.6 1.9 2.6 3.5 0 2-1.8 3.6-3.9 3.6S0.6 9.8 0.6 7.8c0-1.6 1-2.8 2.6-3.5z" fill="#ecdcdc" stroke="#b89c9c" stroke-width="0.8"/><path d="M1.2 7.6h6.6c0 2-1.4 3.2-3.3 3.2S1.2 9.6 1.2 7.6z" fill="#d0b4b4"/><path d="M4.5 1.6v8.6" stroke="#9c7c7c" stroke-width="1"/></g></svg>
<svg style="left:167.0px;top:595.2px" width="9.2" height="12" viewBox="0 0 9.2 12"><g opacity="0.9"><path d="M3.2 0.5h2.6v3.8c1.6 0.7 2.6 1.9 2.6 3.5 0 2-1.8 3.6-3.9 3.6S0.6 9.8 0.6 7.8c0-1.6 1-2.8 2.6-3.5z" fill="#ecdcdc" stroke="#b89c9c" stroke-width="0.8"/><path d="M1.2 7.6h6.6c0 2-1.4 3.2-3.3 3.2S1.2 9.6 1.2 7.6z" fill="#d0b4b4"/><path d="M4.5 1.6v8.6" stroke="#9c7c7c" stroke-width="1"/></g></svg>
<svg style="left:185.4px;top:595.2px" width="9.2" height="12" viewBox="0 0 9.2 12"><g opacity="0.9"><path d="M3.2 0.5h2.6v3.8c1.6 0.7 2.6 1.9 2.6 3.5 0 2-1.8 3.6-3.9 3.6S0.6 9.8 0.6 7.8c0-1.6 1-2.8 2.6-3.5z" fill="#ecdcdc" stroke="#b89c9c" stroke-width="0.8"/><path d="M1.2 7.6h6.6c0 2-1.4 3.2-3.3 3.2S1.2 9.6 1.2 7.6z" fill="#d0b4b4"/><path d="M4.5 1.6v8.6" stroke="#9c7c7c" stroke-width="1"/></g></svg>
<div class="r" style="left:200.8px;top:594.6px;width:1px;height:13.6px;background:#bcbcbc;"></div>
<svg style="left:207.2px;top:595.6px" width="11.6" height="11.6" viewBox="0 0 11.6 11.6"><g opacity="0.95"><circle cx="5.8" cy="5.8" r="5.2" fill="#e4cccc" stroke="#a88888" stroke-width="0.9"/><path d="M0.8 4.6h10M0.8 7.2h10" stroke="#7a5c5c" stroke-width="1.1"/><path d="M1.6 5.9h8.4" stroke="#f8f0f0" stroke-width="1.3"/></g></svg>
<svg style="left:1.6px;top:2px" width="13.6" height="13" viewBox="0 0 13.6 13"><defs><radialGradient id="appg" cx="0.4" cy="0.35" r="0.75"><stop offset="0" stop-color="#5a9af0"/><stop offset="0.6" stop-color="#1c50b8"/><stop offset="1" stop-color="#0c2a70"/></radialGradient></defs><path d="M1 6.2c0.6-3 3.6-5.4 7.4-5.6 2.6-0.2 4.8 1.4 4.6 4.2-0.2 3.6-3 7-7.4 7.4C2.8 12.4 0.4 9.6 1 6.2z" fill="url(#appg)"/><path d="M4 5.6c1.4-1.2 3-1.4 4.2-0.8" stroke="#a8ccff" stroke-width="1.1" fill="none"/></svg>
</div>
</body></html>
